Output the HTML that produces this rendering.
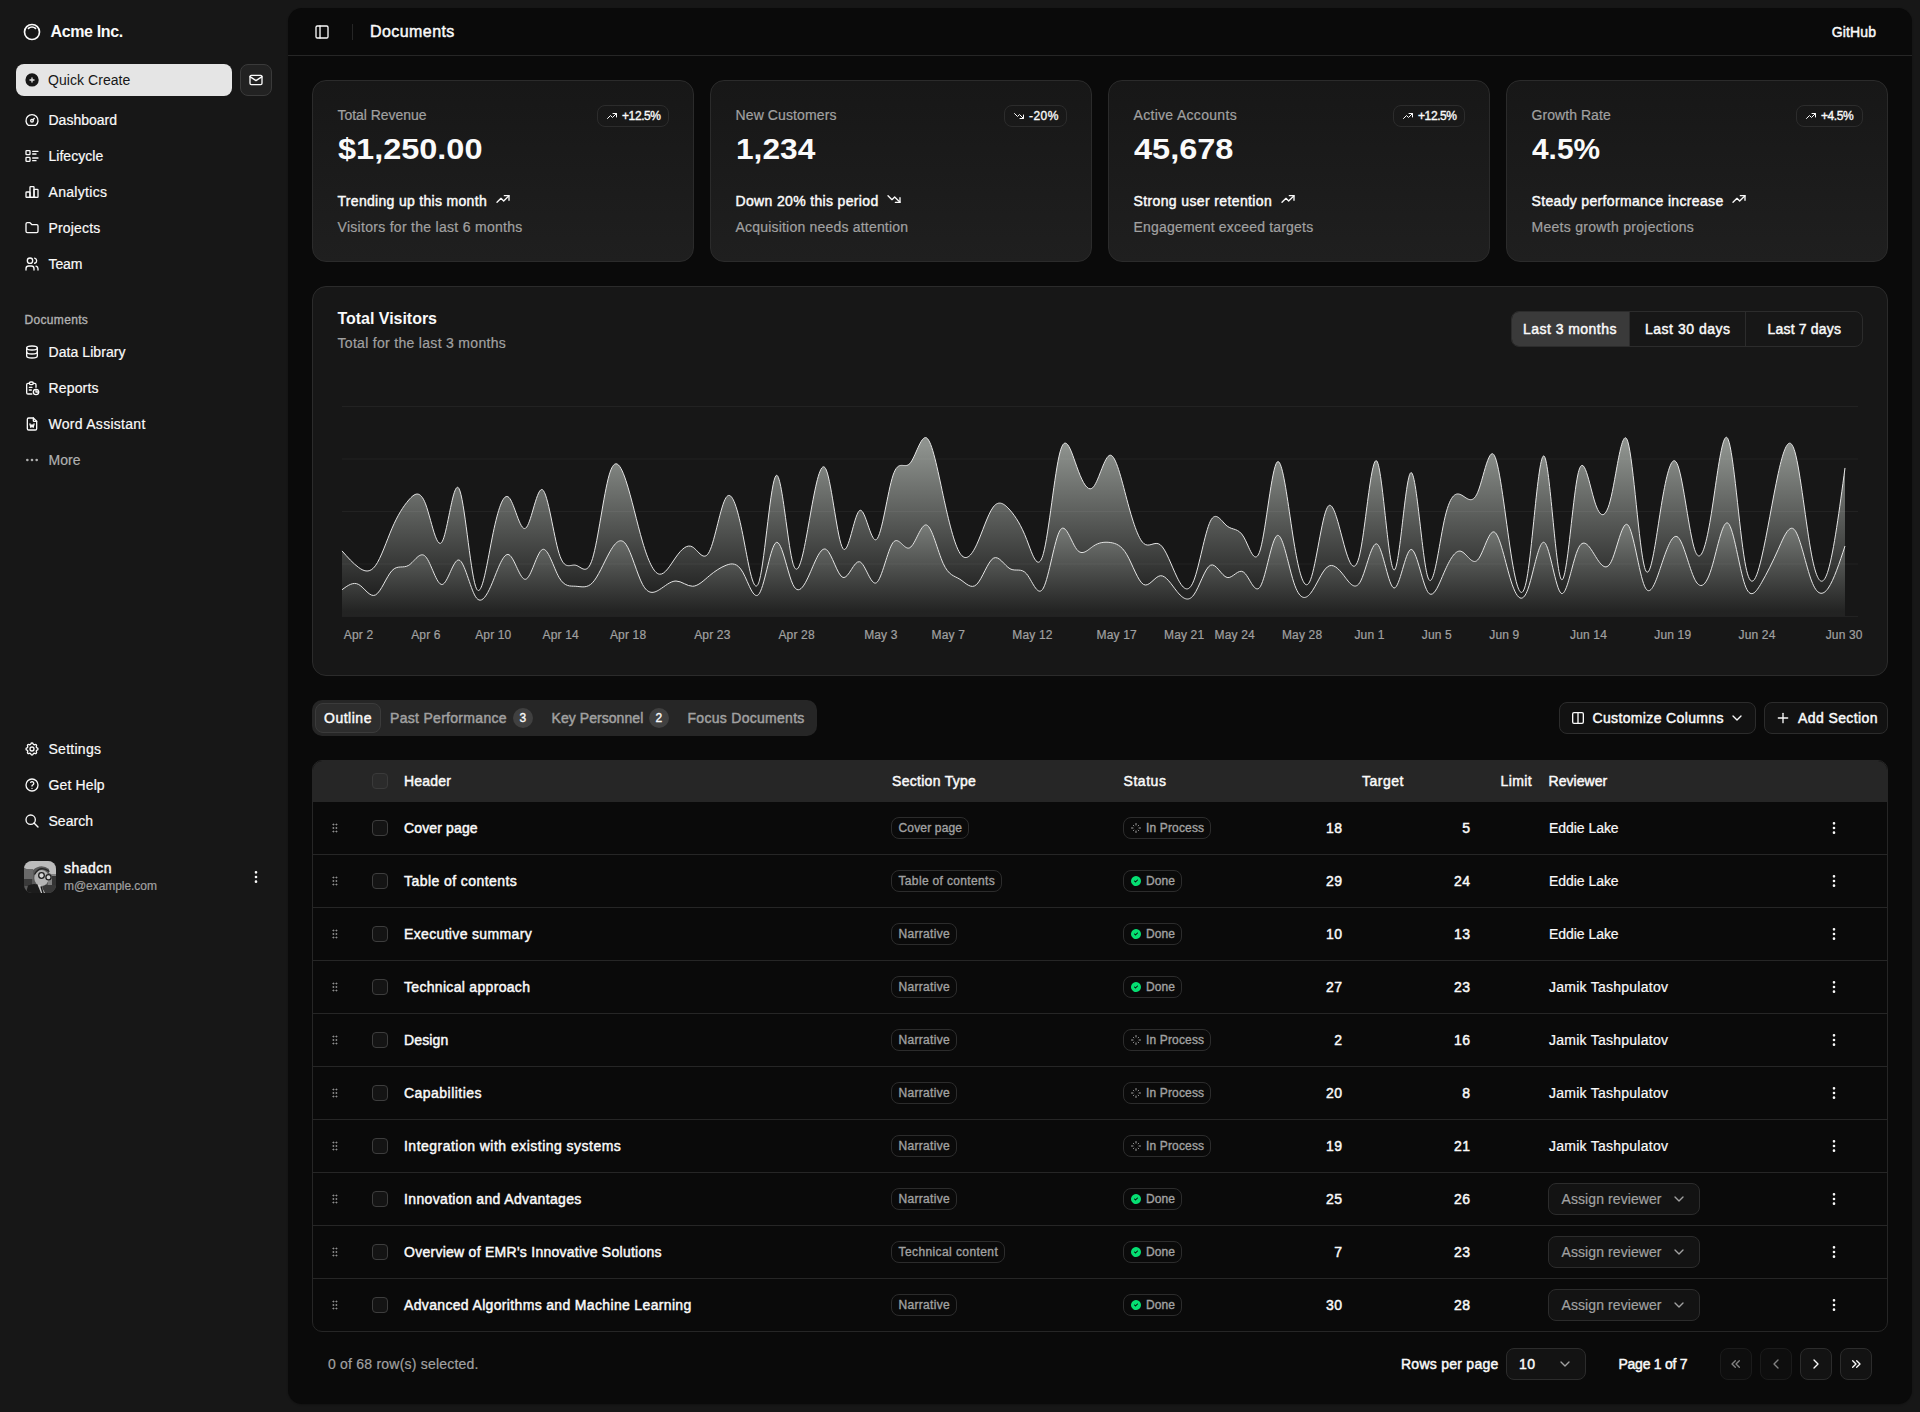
<!DOCTYPE html>
<html><head><meta charset="utf-8"><title>Documents</title>
<style>
html,body{margin:0;padding:0;}
body{width:1920px;height:1412px;background:#171717;position:relative;overflow:hidden;font-family:"Liberation Sans",sans-serif;}
.t{position:absolute;white-space:nowrap;}
.r{position:absolute;}
.ic{position:absolute;overflow:visible;}
</style></head><body>
<svg class="ic" style="left:22px;top:22px;width:20px;height:20px;" viewBox="0 0 24 24" fill="none" stroke="#fafafa" stroke-width="2" stroke-linecap="round" stroke-linejoin="round"><path d="M5.636 5.636a9 9 0 1 0 12.728 12.728a9 9 0 0 0 -12.728 -12.728z"/><path d="M16.243 7.757a6 6 0 0 0 -8.486 0"/></svg>
<div class="t" style="left:50.5px;top:24px;font-size:16px;line-height:16px;color:#fafafa;font-weight:700;letter-spacing:-0.363px;">Acme Inc.</div>
<div class="r" style="left:16px;top:64px;width:216px;height:32px;background:#e5e5e5;border-radius:8px;"></div>
<svg class="ic" style="left:24px;top:72px;width:16px;height:16px;" viewBox="0 0 24 24" fill="#171717" stroke="none"><path d="M4.929 4.929a10 10 0 1 1 14.141 14.141a10 10 0 0 1 -14.14 -14.14zm8.071 4.071a1 1 0 1 0 -2 0v2h-2a1 1 0 1 0 0 2h2v2a1 1 0 1 0 2 0v-2h2a1 1 0 1 0 0 -2h-2v-2z"/></svg>
<div class="t" style="left:48px;top:73px;font-size:14px;line-height:14px;color:#171717;letter-spacing:0.055px;">Quick Create</div>
<div class="r" style="left:240px;top:64px;width:32px;height:32px;background:#222222;border:1px solid #3a3a3a;box-sizing:border-box;border-radius:8px;"></div>
<svg class="ic" style="left:248px;top:72px;width:16px;height:16px;" viewBox="0 0 24 24" fill="none" stroke="#fafafa" stroke-width="2" stroke-linecap="round" stroke-linejoin="round"><path d="M3 7a2 2 0 0 1 2 -2h14a2 2 0 0 1 2 2v10a2 2 0 0 1 -2 2h-14a2 2 0 0 1 -2 -2v-10z"/><path d="M3 7l9 6l9 -6"/></svg>
<svg class="ic" style="left:24px;top:112px;width:16px;height:16px;" viewBox="0 0 24 24" fill="none" stroke="#fafafa" stroke-width="2" stroke-linecap="round" stroke-linejoin="round"><path d="M12 13m-2 0a2 2 0 1 0 4 0a2 2 0 1 0 -4 0"/><path d="M13.45 11.55l2.05 -2.05"/><path d="M6.4 20a9 9 0 1 1 11.2 0z"/></svg>
<div class="t" style="left:48.5px;top:113px;font-size:14px;line-height:14px;color:#fafafa;-webkit-text-stroke:0.2px #fafafa;">Dashboard</div>
<svg class="ic" style="left:24px;top:148px;width:16px;height:16px;" viewBox="0 0 24 24" fill="none" stroke="#fafafa" stroke-width="2" stroke-linecap="round" stroke-linejoin="round"><path d="M13 5h8"/><path d="M13 9h5"/><path d="M13 15h8"/><path d="M13 19h5"/><path d="M3 4m0 1a1 1 0 0 1 1 -1h4a1 1 0 0 1 1 1v4a1 1 0 0 1 -1 1h-4a1 1 0 0 1 -1 -1z"/><path d="M3 14m0 1a1 1 0 0 1 1 -1h4a1 1 0 0 1 1 1v4a1 1 0 0 1 -1 1h-4a1 1 0 0 1 -1 -1z"/></svg>
<div class="t" style="left:48.5px;top:149px;font-size:14px;line-height:14px;color:#fafafa;-webkit-text-stroke:0.2px #fafafa;letter-spacing:0.025px;">Lifecycle</div>
<svg class="ic" style="left:24px;top:184px;width:16px;height:16px;" viewBox="0 0 24 24" fill="none" stroke="#fafafa" stroke-width="2" stroke-linecap="round" stroke-linejoin="round"><path d="M3 13a1 1 0 0 1 1 -1h4a1 1 0 0 1 1 1v6a1 1 0 0 1 -1 1h-4a1 1 0 0 1 -1 -1l0 -6"/><path d="M15 9a1 1 0 0 1 1 -1h4a1 1 0 0 1 1 1v10a1 1 0 0 1 -1 1h-4a1 1 0 0 1 -1 -1l0 -10"/><path d="M9 5a1 1 0 0 1 1 -1h4a1 1 0 0 1 1 1v14a1 1 0 0 1 -1 1h-4a1 1 0 0 1 -1 -1l0 -14"/><path d="M4 20h14"/></svg>
<div class="t" style="left:48.5px;top:185px;font-size:14px;line-height:14px;color:#fafafa;-webkit-text-stroke:0.2px #fafafa;letter-spacing:0.312px;">Analytics</div>
<svg class="ic" style="left:24px;top:220px;width:16px;height:16px;" viewBox="0 0 24 24" fill="none" stroke="#fafafa" stroke-width="2" stroke-linecap="round" stroke-linejoin="round"><path d="M5 4h4l3 3h7a2 2 0 0 1 2 2v8a2 2 0 0 1 -2 2h-14a2 2 0 0 1 -2 -2v-11a2 2 0 0 1 2 -2"/></svg>
<div class="t" style="left:48.5px;top:221px;font-size:14px;line-height:14px;color:#fafafa;-webkit-text-stroke:0.2px #fafafa;letter-spacing:0.179px;">Projects</div>
<svg class="ic" style="left:24px;top:256px;width:16px;height:16px;" viewBox="0 0 24 24" fill="none" stroke="#fafafa" stroke-width="2" stroke-linecap="round" stroke-linejoin="round"><path d="M9 7m-4 0a4 4 0 1 0 8 0a4 4 0 1 0 -8 0"/><path d="M3 21v-2a4 4 0 0 1 4 -4h4a4 4 0 0 1 4 4v2"/><path d="M16 3.13a4 4 0 0 1 0 7.75"/><path d="M21 21v-2a4 4 0 0 0 -3 -3.85"/></svg>
<div class="t" style="left:48.5px;top:257px;font-size:14px;line-height:14px;color:#fafafa;-webkit-text-stroke:0.2px #fafafa;letter-spacing:-0.083px;">Team</div>
<div class="t" style="left:24.5px;top:314px;font-size:12px;line-height:12px;color:#b0b0b0;-webkit-text-stroke:0.35px #b0b0b0;letter-spacing:0.325px;">Documents</div>
<svg class="ic" style="left:24px;top:344px;width:16px;height:16px;" viewBox="0 0 24 24" fill="none" stroke="#fafafa" stroke-width="2" stroke-linecap="round" stroke-linejoin="round"><path d="M12 6m-8 0a8 3 0 1 0 16 0a8 3 0 1 0 -16 0"/><path d="M4 6v6a8 3 0 0 0 16 0v-6"/><path d="M4 12v6a8 3 0 0 0 16 0v-6"/></svg>
<div class="t" style="left:48.5px;top:345px;font-size:14px;line-height:14px;color:#fafafa;-webkit-text-stroke:0.2px #fafafa;letter-spacing:0.064px;">Data Library</div>
<svg class="ic" style="left:24px;top:380px;width:16px;height:16px;" viewBox="0 0 24 24" fill="none" stroke="#fafafa" stroke-width="2" stroke-linecap="round" stroke-linejoin="round"><path d="M8 5h-2a2 2 0 0 0 -2 2v12a2 2 0 0 0 2 2h5.697"/><path d="M18 14v4h4"/><path d="M18 11v-4a2 2 0 0 0 -2 -2h-2"/><path d="M8 3m0 2a2 2 0 0 1 2 -2h2a2 2 0 0 1 2 2v0a2 2 0 0 1 -2 2h-2a2 2 0 0 1 -2 -2z"/><path d="M18 18m-4 0a4 4 0 1 0 8 0a4 4 0 1 0 -8 0"/><path d="M8 11h4"/><path d="M8 15h3"/></svg>
<div class="t" style="left:48.5px;top:381px;font-size:14px;line-height:14px;color:#fafafa;-webkit-text-stroke:0.2px #fafafa;letter-spacing:0.15px;">Reports</div>
<svg class="ic" style="left:24px;top:416px;width:16px;height:16px;" viewBox="0 0 24 24" fill="none" stroke="#fafafa" stroke-width="2" stroke-linecap="round" stroke-linejoin="round"><path d="M14 3v4a1 1 0 0 0 1 1h4"/><path d="M17 21h-10a2 2 0 0 1 -2 -2v-14a2 2 0 0 1 2 -2h7l5 5v11a2 2 0 0 1 -2 2z"/><path d="M9 12l1.333 5l1.667 -4l1.667 4l1.333 -5"/></svg>
<div class="t" style="left:48.5px;top:417px;font-size:14px;line-height:14px;color:#fafafa;-webkit-text-stroke:0.2px #fafafa;letter-spacing:0.285px;">Word Assistant</div>
<svg class="ic" style="left:24px;top:452px;width:16px;height:16px;" viewBox="0 0 24 24" fill="none" stroke="#b0b0b0" stroke-width="2" stroke-linecap="round" stroke-linejoin="round"><path d="M5 12m-1 0a1 1 0 1 0 2 0a1 1 0 1 0 -2 0"/><path d="M12 12m-1 0a1 1 0 1 0 2 0a1 1 0 1 0 -2 0"/><path d="M19 12m-1 0a1 1 0 1 0 2 0a1 1 0 1 0 -2 0"/></svg>
<div class="t" style="left:48.5px;top:453px;font-size:14px;line-height:14px;color:#b0b0b0;-webkit-text-stroke:0.2px #b0b0b0;letter-spacing:0.033px;">More</div>
<svg class="ic" style="left:24px;top:741px;width:16px;height:16px;" viewBox="0 0 24 24" fill="none" stroke="#fafafa" stroke-width="2" stroke-linecap="round" stroke-linejoin="round"><path d="M10.325 4.317c.426 -1.756 2.924 -1.756 3.35 0a1.724 1.724 0 0 0 2.573 1.066c1.543 -.94 3.31 .826 2.37 2.37a1.724 1.724 0 0 0 1.065 2.572c1.756 .426 1.756 2.924 0 3.35a1.724 1.724 0 0 0 -1.066 2.573c.94 1.543 -.826 3.31 -2.37 2.37a1.724 1.724 0 0 0 -2.572 1.065c-.426 1.756 -2.924 1.756 -3.35 0a1.724 1.724 0 0 0 -2.573 -1.066c-1.543 .94 -3.31 -.826 -2.37 -2.37a1.724 1.724 0 0 0 -1.065 -2.572c-1.756 -.426 -1.756 -2.924 0 -3.35a1.724 1.724 0 0 0 1.066 -2.573c-.94 -1.543 .826 -3.31 2.37 -2.37c1 .608 2.296 .07 2.572 -1.065z"/><path d="M9 12a3 3 0 1 0 6 0a3 3 0 0 0 -6 0"/></svg>
<div class="t" style="left:48.5px;top:742px;font-size:14px;line-height:14px;color:#fafafa;-webkit-text-stroke:0.2px #fafafa;letter-spacing:0.271px;">Settings</div>
<svg class="ic" style="left:24px;top:777px;width:16px;height:16px;" viewBox="0 0 24 24" fill="none" stroke="#fafafa" stroke-width="2" stroke-linecap="round" stroke-linejoin="round"><path d="M12 12m-9 0a9 9 0 1 0 18 0a9 9 0 1 0 -18 0"/><path d="M12 17l0 .01"/><path d="M12 13.5a1.5 1.5 0 0 1 1 -1.5a2.6 2.6 0 1 0 -3 -4"/></svg>
<div class="t" style="left:48.5px;top:778px;font-size:14px;line-height:14px;color:#fafafa;-webkit-text-stroke:0.2px #fafafa;letter-spacing:0.129px;">Get Help</div>
<svg class="ic" style="left:24px;top:813px;width:16px;height:16px;" viewBox="0 0 24 24" fill="none" stroke="#fafafa" stroke-width="2" stroke-linecap="round" stroke-linejoin="round"><path d="M10 10m-7 0a7 7 0 1 0 14 0a7 7 0 1 0 -14 0"/><path d="M21 21l-6 -6"/></svg>
<div class="t" style="left:48.5px;top:814px;font-size:14px;line-height:14px;color:#fafafa;-webkit-text-stroke:0.2px #fafafa;letter-spacing:0.02px;">Search</div>
<div class="r" style="left:24px;top:861px;width:32px;height:32px;border-radius:8px;overflow:hidden;"><svg width="32" height="32" viewBox="0 0 32 32" style="position:absolute;left:0;top:0"><rect width="32" height="32" fill="#5a5a5a"/><path d="M0 0 H32 V15 Q28 14 25 12 L25 8 Q17 2 9 9 L9 8 Q4 9 0 7Z" fill="#bcbcbc"/><rect x="0" y="8" width="9" height="10" fill="#6a6a6a"/><rect x="0" y="18" width="8" height="7" fill="#3a3a3a"/><rect x="24" y="13" width="8" height="11" fill="#808080"/><rect x="28" y="15" width="4" height="10" fill="#333"/><rect x="19" y="24" width="13" height="8" fill="#383838"/><ellipse cx="17.5" cy="17" rx="7.2" ry="8" fill="#b4b4b4"/><path d="M10.5 13.5 Q16 3.5 25.5 10.5" fill="none" stroke="#262626" stroke-width="1.3"/><circle cx="17.5" cy="14.5" r="2.8" fill="#d6d6d6" stroke="#1e1e1e" stroke-width="1.3"/><circle cx="24.5" cy="16.2" r="2.6" fill="#d0d0d0" stroke="#1e1e1e" stroke-width="1.3"/><path d="M2 32 L4 24.5 Q9 22 13.5 23.5 L19 32Z" fill="#1c1c1c"/><path d="M13.5 23.5 L16.5 24 L21 32 L17 32Z" fill="#cfcfcf"/><path d="M16.3 25.5 L17.8 25.5 L19.8 32 L18.2 32Z" fill="#1a1a1a"/></svg></div>
<div class="t" style="left:64px;top:861px;font-size:14px;line-height:14px;color:#fafafa;-webkit-text-stroke:0.45px #fafafa;letter-spacing:0.46px;">shadcn</div>
<div class="t" style="left:64px;top:880px;font-size:12px;line-height:12px;color:#a1a1a1;-webkit-text-stroke:0.2px #a1a1a1;letter-spacing:-0.05px;">m@example.com</div>
<svg class="ic" style="left:248px;top:869px;width:16px;height:16px;" viewBox="0 0 24 24" fill="none" stroke="#fafafa" stroke-width="2" stroke-linecap="round" stroke-linejoin="round"><path d="M12 12m-1 0a1 1 0 1 0 2 0a1 1 0 1 0 -2 0"/><path d="M12 19m-1 0a1 1 0 1 0 2 0a1 1 0 1 0 -2 0"/><path d="M12 5m-1 0a1 1 0 1 0 2 0a1 1 0 1 0 -2 0"/></svg>
<div class="r" style="left:288px;top:8px;width:1624px;height:1396px;background:#0a0a0a;border-radius:14px;box-shadow:0 1px 2px rgba(0,0,0,0.25);"></div>
<div class="r" style="left:288px;top:55px;width:1624px;height:1px;background:#262626;"></div>
<svg class="ic" style="left:314px;top:24px;width:16px;height:16px;" viewBox="0 0 24 24" fill="none" stroke="#fafafa" stroke-width="2" stroke-linecap="round" stroke-linejoin="round"><rect width="18" height="18" x="3" y="3" rx="2"/><path d="M9 3v18"/></svg>
<div class="r" style="left:352px;top:24px;width:1px;height:16px;background:#262626;"></div>
<div class="t" style="left:370px;top:24px;font-size:16px;line-height:16px;color:#fafafa;-webkit-text-stroke:0.45px #fafafa;letter-spacing:0.425px;">Documents</div>
<div class="t" style="right:43.86px;top:25px;font-size:14px;line-height:14px;color:#fafafa;-webkit-text-stroke:0.45px #fafafa;letter-spacing:0.14px;">GitHub</div>
<div class="r" style="left:312px;top:80px;width:382px;height:182px;background:linear-gradient(to top,#1f1f1f,#171717);border:1px solid #2b2b2b;box-sizing:border-box;border-radius:14px;"></div>
<div class="t" style="left:337.5px;top:108px;font-size:14px;line-height:14px;color:#a1a1a1;-webkit-text-stroke:0.2px #a1a1a1;letter-spacing:-0.042px;">Total Revenue</div>
<div class="t" style="left:338px;top:134px;font-size:30px;line-height:30px;color:#fafafa;font-weight:700;transform:scaleX(1.0827);transform-origin:0 0;">$1,250.00</div>
<div class="r" style="left:597px;top:105px;width:72px;height:22px;border:1px solid #2c2c2c;box-sizing:border-box;border-radius:8px;"></div>
<svg class="ic" style="left:606px;top:110px;width:12px;height:12px;" viewBox="0 0 24 24" fill="none" stroke="#fafafa" stroke-width="2" stroke-linecap="round" stroke-linejoin="round"><path d="M3 17l6 -6l4 4l8 -8"/><path d="M14 7l7 0l0 7"/></svg>
<div class="t" style="left:622px;top:110px;font-size:12px;line-height:12px;color:#fafafa;-webkit-text-stroke:0.35px #fafafa;letter-spacing:-0.4px;">+12.5%</div>
<div class="t" style="left:337.5px;top:194px;font-size:14px;line-height:14px;color:#fafafa;-webkit-text-stroke:0.45px #fafafa;letter-spacing:0.31px;">Trending up this month</div>
<svg class="ic" style="left:495.0px;top:191px;width:16px;height:16px;" viewBox="0 0 24 24" fill="none" stroke="#fafafa" stroke-width="2" stroke-linecap="round" stroke-linejoin="round"><path d="M3 17l6 -6l4 4l8 -8"/><path d="M14 7l7 0l0 7"/></svg>
<div class="t" style="left:337.5px;top:220px;font-size:14px;line-height:14px;color:#a1a1a1;-webkit-text-stroke:0.2px #a1a1a1;letter-spacing:0.293px;">Visitors for the last 6 months</div>
<div class="r" style="left:710px;top:80px;width:382px;height:182px;background:linear-gradient(to top,#1f1f1f,#171717);border:1px solid #2b2b2b;box-sizing:border-box;border-radius:14px;"></div>
<div class="t" style="left:735.5px;top:108px;font-size:14px;line-height:14px;color:#a1a1a1;-webkit-text-stroke:0.2px #a1a1a1;letter-spacing:0.117px;">New Customers</div>
<div class="t" style="left:736px;top:134px;font-size:30px;line-height:30px;color:#fafafa;font-weight:700;transform:scaleX(1.0560);transform-origin:0 0;">1,234</div>
<div class="r" style="left:1004px;top:105px;width:63px;height:22px;border:1px solid #2c2c2c;box-sizing:border-box;border-radius:8px;"></div>
<svg class="ic" style="left:1013px;top:110px;width:12px;height:12px;" viewBox="0 0 24 24" fill="none" stroke="#fafafa" stroke-width="2" stroke-linecap="round" stroke-linejoin="round"><path d="M3 7l6 6l4 -4l8 8"/><path d="M21 10l0 7l-7 0"/></svg>
<div class="t" style="left:1029px;top:110px;font-size:12px;line-height:12px;color:#fafafa;-webkit-text-stroke:0.35px #fafafa;letter-spacing:0.467px;">-20%</div>
<div class="t" style="left:735.5px;top:194px;font-size:14px;line-height:14px;color:#fafafa;-webkit-text-stroke:0.45px #fafafa;letter-spacing:0.342px;">Down 20% this period</div>
<svg class="ic" style="left:886.0px;top:191px;width:16px;height:16px;" viewBox="0 0 24 24" fill="none" stroke="#fafafa" stroke-width="2" stroke-linecap="round" stroke-linejoin="round"><path d="M3 7l6 6l4 -4l8 8"/><path d="M21 10l0 7l-7 0"/></svg>
<div class="t" style="left:735.5px;top:220px;font-size:14px;line-height:14px;color:#a1a1a1;-webkit-text-stroke:0.2px #a1a1a1;letter-spacing:0.2px;">Acquisition needs attention</div>
<div class="r" style="left:1108px;top:80px;width:382px;height:182px;background:linear-gradient(to top,#1f1f1f,#171717);border:1px solid #2b2b2b;box-sizing:border-box;border-radius:14px;"></div>
<div class="t" style="left:1133.5px;top:108px;font-size:14px;line-height:14px;color:#a1a1a1;-webkit-text-stroke:0.2px #a1a1a1;letter-spacing:0.307px;">Active Accounts</div>
<div class="t" style="left:1134px;top:134px;font-size:30px;line-height:30px;color:#fafafa;font-weight:700;transform:scaleX(1.0837);transform-origin:0 0;">45,678</div>
<div class="r" style="left:1393px;top:105px;width:72px;height:22px;border:1px solid #2c2c2c;box-sizing:border-box;border-radius:8px;"></div>
<svg class="ic" style="left:1402px;top:110px;width:12px;height:12px;" viewBox="0 0 24 24" fill="none" stroke="#fafafa" stroke-width="2" stroke-linecap="round" stroke-linejoin="round"><path d="M3 17l6 -6l4 4l8 -8"/><path d="M14 7l7 0l0 7"/></svg>
<div class="t" style="left:1418px;top:110px;font-size:12px;line-height:12px;color:#fafafa;-webkit-text-stroke:0.35px #fafafa;letter-spacing:-0.4px;">+12.5%</div>
<div class="t" style="left:1133.5px;top:194px;font-size:14px;line-height:14px;color:#fafafa;-webkit-text-stroke:0.45px #fafafa;letter-spacing:0.375px;">Strong user retention</div>
<svg class="ic" style="left:1280.0px;top:191px;width:16px;height:16px;" viewBox="0 0 24 24" fill="none" stroke="#fafafa" stroke-width="2" stroke-linecap="round" stroke-linejoin="round"><path d="M3 17l6 -6l4 4l8 -8"/><path d="M14 7l7 0l0 7"/></svg>
<div class="t" style="left:1133.5px;top:220px;font-size:14px;line-height:14px;color:#a1a1a1;-webkit-text-stroke:0.2px #a1a1a1;letter-spacing:0.188px;">Engagement exceed targets</div>
<div class="r" style="left:1506px;top:80px;width:382px;height:182px;background:linear-gradient(to top,#1f1f1f,#171717);border:1px solid #2b2b2b;box-sizing:border-box;border-radius:14px;"></div>
<div class="t" style="left:1531.5px;top:108px;font-size:14px;line-height:14px;color:#a1a1a1;-webkit-text-stroke:0.2px #a1a1a1;letter-spacing:0.06px;">Growth Rate</div>
<div class="t" style="left:1532px;top:134px;font-size:30px;line-height:30px;color:#fafafa;font-weight:700;transform:scaleX(0.9956);transform-origin:0 0;">4.5%</div>
<div class="r" style="left:1796px;top:105px;width:67px;height:22px;border:1px solid #2c2c2c;box-sizing:border-box;border-radius:8px;"></div>
<svg class="ic" style="left:1805px;top:110px;width:12px;height:12px;" viewBox="0 0 24 24" fill="none" stroke="#fafafa" stroke-width="2" stroke-linecap="round" stroke-linejoin="round"><path d="M3 17l6 -6l4 4l8 -8"/><path d="M14 7l7 0l0 7"/></svg>
<div class="t" style="left:1821px;top:110px;font-size:12px;line-height:12px;color:#fafafa;-webkit-text-stroke:0.35px #fafafa;letter-spacing:-0.45px;">+4.5%</div>
<div class="t" style="left:1531.5px;top:194px;font-size:14px;line-height:14px;color:#fafafa;-webkit-text-stroke:0.45px #fafafa;letter-spacing:0.338px;">Steady performance increase</div>
<svg class="ic" style="left:1731.3px;top:191px;width:16px;height:16px;" viewBox="0 0 24 24" fill="none" stroke="#fafafa" stroke-width="2" stroke-linecap="round" stroke-linejoin="round"><path d="M3 17l6 -6l4 4l8 -8"/><path d="M14 7l7 0l0 7"/></svg>
<div class="t" style="left:1531.5px;top:220px;font-size:14px;line-height:14px;color:#a1a1a1;-webkit-text-stroke:0.2px #a1a1a1;letter-spacing:0.291px;">Meets growth projections</div>
<div class="r" style="left:312px;top:286px;width:1576px;height:390px;background:#171717;border:1px solid #2b2b2b;box-sizing:border-box;border-radius:14px;"></div>
<div class="t" style="left:337.5px;top:311px;font-size:16px;line-height:16px;color:#fafafa;font-weight:700;letter-spacing:-0.031px;">Total Visitors</div>
<div class="t" style="left:337.5px;top:336px;font-size:14px;line-height:14px;color:#a1a1a1;-webkit-text-stroke:0.2px #a1a1a1;letter-spacing:0.308px;">Total for the last 3 months</div>
<div class="r" style="left:1511px;top:311px;width:352px;height:36px;border:1px solid #2c2c2c;box-sizing:border-box;border-radius:8px;"></div>
<div class="r" style="left:1512px;top:312px;width:117px;height:34px;background:#3a3a3a;border-radius:7px 0 0 7px;"></div>
<div class="r" style="left:1629px;top:312px;width:1px;height:34px;background:#2c2c2c;"></div>
<div class="r" style="left:1745px;top:312px;width:1px;height:34px;background:#2c2c2c;"></div>
<div class="t" style="left:1523px;top:322px;font-size:14px;line-height:14px;color:#fafafa;-webkit-text-stroke:0.45px #fafafa;letter-spacing:0.458px;">Last 3 months</div>
<div class="t" style="left:1645px;top:322px;font-size:14px;line-height:14px;color:#fafafa;-webkit-text-stroke:0.45px #fafafa;letter-spacing:0.509px;">Last 30 days</div>
<div class="t" style="left:1767.5px;top:322px;font-size:14px;line-height:14px;color:#fafafa;-webkit-text-stroke:0.45px #fafafa;letter-spacing:0.19px;">Last 7 days</div>
<svg class="ic" style="left:0;top:0;width:1920px;height:700px" viewBox="0 0 1920 700"><defs><linearGradient id="fd" x1="0" y1="0" x2="0" y2="1"><stop offset="5%" stop-color="#dde4dd" stop-opacity="1"/><stop offset="95%" stop-color="#dde4dd" stop-opacity="0.1"/></linearGradient><linearGradient id="fm" x1="0" y1="0" x2="0" y2="1"><stop offset="5%" stop-color="#dde4dd" stop-opacity="0.8"/><stop offset="95%" stop-color="#dde4dd" stop-opacity="0.1"/></linearGradient></defs><line x1="342" x2="1858" y1="406.5" y2="406.5" stroke="#222222" stroke-width="1"/><line x1="342" x2="1858" y1="459" y2="459" stroke="#222222" stroke-width="1"/><line x1="342" x2="1858" y1="511.5" y2="511.5" stroke="#222222" stroke-width="1"/><line x1="342" x2="1858" y1="564" y2="564" stroke="#222222" stroke-width="1"/><line x1="342" x2="1858" y1="616.5" y2="616.5" stroke="#222222" stroke-width="1"/><path d="M342.00,589.75C347.57,585.60,353.13,581.45,358.70,584.50C364.27,587.55,369.83,597.80,375.40,595.00C380.97,592.20,386.53,576.36,392.10,570.50C397.67,564.64,403.23,568.76,408.80,565.25C414.37,561.74,419.93,550.59,425.50,556.50C431.07,562.41,436.63,585.37,442.20,584.50C447.77,583.63,453.33,558.91,458.90,560.00C464.47,561.09,470.03,587.99,475.60,596.75C481.17,605.51,486.73,596.15,492.30,582.75C497.87,569.35,503.43,551.93,509.00,554.75C514.57,557.57,520.13,580.64,525.70,579.25C531.27,577.86,536.83,552.02,542.40,549.50C547.97,546.98,553.53,567.77,559.10,577.50C564.67,587.23,570.23,585.90,575.80,586.25C581.37,586.60,586.93,588.62,592.50,582.75C598.07,576.88,603.63,563.12,609.20,553.00C614.77,542.88,620.33,536.42,625.90,544.25C631.47,552.08,637.03,574.22,642.60,584.50C648.17,594.78,653.73,593.20,659.30,589.75C664.87,586.30,670.43,580.97,676.00,581.00C681.57,581.03,687.13,586.40,692.70,586.25C698.27,586.10,703.83,580.42,709.40,575.75C714.97,571.08,720.53,567.42,726.10,565.25C731.67,563.08,737.23,562.41,742.80,572.25C748.37,582.09,753.93,602.44,759.50,593.25C765.07,584.06,770.63,545.32,776.20,542.50C781.77,539.68,787.33,572.78,792.90,584.50C798.47,596.22,804.03,586.58,809.60,574.00C815.17,561.42,820.73,545.91,826.30,549.50C831.87,553.09,837.43,575.77,843.00,577.50C848.57,579.23,854.13,560.00,859.70,561.75C865.27,563.50,870.83,586.22,876.40,582.75C881.97,579.28,887.53,549.63,893.10,542.50C898.67,535.37,904.23,550.75,909.80,547.75C915.37,544.75,920.93,523.38,926.50,525.00C932.07,526.62,937.63,551.22,943.20,563.50C948.77,575.78,954.33,575.75,959.90,579.25C965.47,582.75,971.03,589.77,976.60,584.50C982.17,579.23,987.73,561.65,993.30,558.25C998.87,554.85,1004.43,565.62,1010.00,568.75C1015.57,571.88,1021.13,567.37,1026.70,574.00C1032.27,580.63,1037.83,598.40,1043.40,588.00C1048.97,577.60,1054.53,539.04,1060.10,530.25C1065.67,521.46,1071.23,542.44,1076.80,549.50C1082.37,556.56,1087.93,549.70,1093.50,546.00C1099.07,542.30,1104.63,541.78,1110.20,542.50C1115.77,543.22,1121.33,545.19,1126.90,554.75C1132.47,564.31,1138.03,581.46,1143.60,584.50C1149.17,587.54,1154.73,576.48,1160.30,575.75C1165.87,575.02,1171.43,584.61,1177.00,591.50C1182.57,598.39,1188.13,602.58,1193.70,595.00C1199.27,587.42,1204.83,568.08,1210.40,565.25C1215.97,562.42,1221.53,576.10,1227.10,577.50C1232.67,578.90,1238.23,568.02,1243.80,572.25C1249.37,576.48,1254.93,595.82,1260.50,586.25C1266.07,576.68,1271.63,538.20,1277.20,535.50C1282.77,532.80,1288.33,565.88,1293.90,582.75C1299.47,599.62,1305.03,600.30,1310.60,593.25C1316.17,586.20,1321.73,571.44,1327.30,567.00C1332.87,562.56,1338.43,568.45,1344.00,575.75C1349.57,583.05,1355.13,591.77,1360.70,581.00C1366.27,570.23,1371.83,539.97,1377.40,544.25C1382.97,548.53,1388.53,587.36,1394.10,588.00C1399.67,588.64,1405.23,551.11,1410.80,549.50C1416.37,547.89,1421.93,582.22,1427.50,591.50C1433.07,600.78,1438.63,585.03,1444.20,572.25C1449.77,559.47,1455.33,549.67,1460.90,551.25C1466.47,552.83,1472.03,565.78,1477.60,560.00C1483.17,554.22,1488.73,529.70,1494.30,532.00C1499.87,534.30,1505.43,563.41,1511.00,581.00C1516.57,598.59,1522.13,604.67,1527.70,589.75C1533.27,574.83,1538.83,538.92,1544.40,542.50C1549.97,546.08,1555.53,589.17,1561.10,593.25C1566.67,597.33,1572.23,562.41,1577.80,549.50C1583.37,536.59,1588.93,545.68,1594.50,554.75C1600.07,563.82,1605.63,572.88,1611.20,561.75C1616.77,550.62,1622.33,519.29,1627.90,525.00C1633.47,530.71,1639.03,573.45,1644.60,586.25C1650.17,599.05,1655.73,581.92,1661.30,565.25C1666.87,548.58,1672.43,532.36,1678.00,537.25C1683.57,542.14,1689.13,568.13,1694.70,579.25C1700.27,590.37,1705.83,586.62,1711.40,568.75C1716.97,550.88,1722.53,518.90,1728.10,523.25C1733.67,527.60,1739.23,568.30,1744.80,584.50C1750.37,600.70,1755.93,592.41,1761.50,582.75C1767.07,573.09,1772.63,562.05,1778.20,549.50C1783.77,536.95,1789.33,522.90,1794.90,530.25C1800.47,537.60,1806.03,566.35,1811.60,581.00C1817.17,595.65,1822.73,596.18,1828.30,588.00C1833.87,579.82,1839.43,562.91,1845.00,546.00L1845.00,616.00L342.00,616.00Z" fill="url(#fm)" fill-opacity="0.6" stroke="none"/><path d="M342.00,589.75C347.57,585.60,353.13,581.45,358.70,584.50C364.27,587.55,369.83,597.80,375.40,595.00C380.97,592.20,386.53,576.36,392.10,570.50C397.67,564.64,403.23,568.76,408.80,565.25C414.37,561.74,419.93,550.59,425.50,556.50C431.07,562.41,436.63,585.37,442.20,584.50C447.77,583.63,453.33,558.91,458.90,560.00C464.47,561.09,470.03,587.99,475.60,596.75C481.17,605.51,486.73,596.15,492.30,582.75C497.87,569.35,503.43,551.93,509.00,554.75C514.57,557.57,520.13,580.64,525.70,579.25C531.27,577.86,536.83,552.02,542.40,549.50C547.97,546.98,553.53,567.77,559.10,577.50C564.67,587.23,570.23,585.90,575.80,586.25C581.37,586.60,586.93,588.62,592.50,582.75C598.07,576.88,603.63,563.12,609.20,553.00C614.77,542.88,620.33,536.42,625.90,544.25C631.47,552.08,637.03,574.22,642.60,584.50C648.17,594.78,653.73,593.20,659.30,589.75C664.87,586.30,670.43,580.97,676.00,581.00C681.57,581.03,687.13,586.40,692.70,586.25C698.27,586.10,703.83,580.42,709.40,575.75C714.97,571.08,720.53,567.42,726.10,565.25C731.67,563.08,737.23,562.41,742.80,572.25C748.37,582.09,753.93,602.44,759.50,593.25C765.07,584.06,770.63,545.32,776.20,542.50C781.77,539.68,787.33,572.78,792.90,584.50C798.47,596.22,804.03,586.58,809.60,574.00C815.17,561.42,820.73,545.91,826.30,549.50C831.87,553.09,837.43,575.77,843.00,577.50C848.57,579.23,854.13,560.00,859.70,561.75C865.27,563.50,870.83,586.22,876.40,582.75C881.97,579.28,887.53,549.63,893.10,542.50C898.67,535.37,904.23,550.75,909.80,547.75C915.37,544.75,920.93,523.38,926.50,525.00C932.07,526.62,937.63,551.22,943.20,563.50C948.77,575.78,954.33,575.75,959.90,579.25C965.47,582.75,971.03,589.77,976.60,584.50C982.17,579.23,987.73,561.65,993.30,558.25C998.87,554.85,1004.43,565.62,1010.00,568.75C1015.57,571.88,1021.13,567.37,1026.70,574.00C1032.27,580.63,1037.83,598.40,1043.40,588.00C1048.97,577.60,1054.53,539.04,1060.10,530.25C1065.67,521.46,1071.23,542.44,1076.80,549.50C1082.37,556.56,1087.93,549.70,1093.50,546.00C1099.07,542.30,1104.63,541.78,1110.20,542.50C1115.77,543.22,1121.33,545.19,1126.90,554.75C1132.47,564.31,1138.03,581.46,1143.60,584.50C1149.17,587.54,1154.73,576.48,1160.30,575.75C1165.87,575.02,1171.43,584.61,1177.00,591.50C1182.57,598.39,1188.13,602.58,1193.70,595.00C1199.27,587.42,1204.83,568.08,1210.40,565.25C1215.97,562.42,1221.53,576.10,1227.10,577.50C1232.67,578.90,1238.23,568.02,1243.80,572.25C1249.37,576.48,1254.93,595.82,1260.50,586.25C1266.07,576.68,1271.63,538.20,1277.20,535.50C1282.77,532.80,1288.33,565.88,1293.90,582.75C1299.47,599.62,1305.03,600.30,1310.60,593.25C1316.17,586.20,1321.73,571.44,1327.30,567.00C1332.87,562.56,1338.43,568.45,1344.00,575.75C1349.57,583.05,1355.13,591.77,1360.70,581.00C1366.27,570.23,1371.83,539.97,1377.40,544.25C1382.97,548.53,1388.53,587.36,1394.10,588.00C1399.67,588.64,1405.23,551.11,1410.80,549.50C1416.37,547.89,1421.93,582.22,1427.50,591.50C1433.07,600.78,1438.63,585.03,1444.20,572.25C1449.77,559.47,1455.33,549.67,1460.90,551.25C1466.47,552.83,1472.03,565.78,1477.60,560.00C1483.17,554.22,1488.73,529.70,1494.30,532.00C1499.87,534.30,1505.43,563.41,1511.00,581.00C1516.57,598.59,1522.13,604.67,1527.70,589.75C1533.27,574.83,1538.83,538.92,1544.40,542.50C1549.97,546.08,1555.53,589.17,1561.10,593.25C1566.67,597.33,1572.23,562.41,1577.80,549.50C1583.37,536.59,1588.93,545.68,1594.50,554.75C1600.07,563.82,1605.63,572.88,1611.20,561.75C1616.77,550.62,1622.33,519.29,1627.90,525.00C1633.47,530.71,1639.03,573.45,1644.60,586.25C1650.17,599.05,1655.73,581.92,1661.30,565.25C1666.87,548.58,1672.43,532.36,1678.00,537.25C1683.57,542.14,1689.13,568.13,1694.70,579.25C1700.27,590.37,1705.83,586.62,1711.40,568.75C1716.97,550.88,1722.53,518.90,1728.10,523.25C1733.67,527.60,1739.23,568.30,1744.80,584.50C1750.37,600.70,1755.93,592.41,1761.50,582.75C1767.07,573.09,1772.63,562.05,1778.20,549.50C1783.77,536.95,1789.33,522.90,1794.90,530.25C1800.47,537.60,1806.03,566.35,1811.60,581.00C1817.17,595.65,1822.73,596.18,1828.30,588.00C1833.87,579.82,1839.43,562.91,1845.00,546.00" fill="none" stroke="#e5e5e5" stroke-width="1"/><path d="M342.00,550.90C347.57,557.19,353.13,563.47,358.70,567.52C364.27,571.58,369.83,573.40,375.40,565.77C380.97,558.15,386.53,541.08,392.10,528.15C397.67,515.22,403.23,506.45,408.80,499.98C414.37,493.50,419.93,489.33,425.50,503.82C431.07,518.32,436.63,551.47,442.20,541.62C447.77,531.78,453.33,478.95,458.90,488.43C464.47,497.90,470.03,569.67,475.60,586.42C481.17,603.18,486.73,564.93,492.30,537.08C497.87,509.22,503.43,491.76,509.00,497.52C514.57,503.29,520.13,532.29,525.70,528.15C531.27,524.01,536.83,486.73,542.40,489.65C547.97,492.57,553.53,535.69,559.10,553.52C564.67,571.36,570.23,563.91,575.80,565.25C581.37,566.59,586.93,576.71,592.50,558.60C598.07,540.49,603.63,494.14,609.20,474.95C614.77,455.76,620.33,463.74,625.90,480.55C631.47,497.36,637.03,523.02,642.60,541.98C648.17,560.93,653.73,573.18,659.30,574.17C664.87,575.17,670.43,564.90,676.00,557.02C681.57,549.15,687.13,543.66,692.70,547.05C698.27,550.44,703.83,562.72,709.40,551.60C714.97,540.48,720.53,505.98,726.10,497.52C731.67,489.07,737.23,506.67,742.80,534.62C748.37,562.58,753.93,600.91,759.50,580.12C765.07,559.34,770.63,479.46,776.20,475.48C781.77,471.49,787.33,543.41,792.90,563.15C798.47,582.89,804.03,550.45,809.60,518.88C815.17,487.30,820.73,456.60,826.30,470.05C831.87,483.50,837.43,541.08,843.00,548.62C848.57,556.17,854.13,513.66,859.70,510.48C865.27,507.29,870.83,543.44,876.40,539.52C881.97,535.61,887.53,491.65,893.10,475.12C898.67,458.60,904.23,469.52,909.80,463.58C915.37,457.63,920.93,434.83,926.50,437.85C932.07,440.87,937.63,469.73,943.20,495.60C948.77,521.47,954.33,544.37,959.90,553.17C965.47,561.98,971.03,556.71,976.60,544.77C982.17,532.84,987.73,514.25,993.30,506.98C998.87,499.70,1004.43,503.76,1010.00,510.12C1015.57,516.49,1021.13,525.17,1026.70,539.52C1032.27,553.88,1037.83,573.91,1043.40,553.52C1048.97,533.14,1054.53,472.34,1060.10,451.85C1065.67,431.36,1071.23,451.18,1076.80,466.73C1082.37,482.27,1087.93,493.53,1093.50,486.85C1099.07,480.17,1104.63,455.53,1110.20,455.18C1115.77,454.82,1121.33,478.73,1126.90,499.62C1132.47,520.52,1138.03,538.40,1143.60,543.38C1149.17,548.35,1154.73,540.44,1160.30,544.77C1165.87,549.11,1171.43,565.71,1177.00,577.15C1182.57,588.59,1188.13,594.86,1193.70,580.83C1199.27,566.79,1204.83,532.44,1210.40,521.15C1215.97,509.86,1221.53,521.64,1227.10,526.05C1232.67,530.46,1238.23,527.49,1243.80,537.08C1249.37,546.66,1254.93,568.79,1260.50,548.98C1266.07,529.16,1271.63,467.40,1277.20,462.00C1282.77,456.60,1288.33,507.55,1293.90,541.98C1299.47,576.40,1305.03,594.28,1310.60,579.60C1316.17,564.92,1321.73,517.66,1327.30,507.50C1332.87,497.34,1338.43,524.29,1344.00,544.60C1349.57,564.91,1355.13,578.60,1360.70,549.85C1366.27,521.10,1371.83,449.91,1377.40,462.00C1382.97,474.09,1388.53,569.47,1394.10,569.98C1399.67,570.48,1405.23,476.11,1410.80,472.68C1416.37,469.24,1421.93,556.75,1427.50,576.10C1433.07,595.45,1438.63,546.64,1444.20,520.80C1449.77,494.96,1455.33,492.09,1460.90,494.73C1466.47,497.36,1472.03,505.51,1477.60,492.62C1483.17,479.74,1488.73,445.82,1494.30,455.35C1499.87,464.88,1505.43,517.84,1511.00,553.88C1516.57,589.91,1522.13,609.00,1527.70,573.65C1533.27,538.30,1538.83,448.52,1544.40,456.40C1549.97,464.28,1555.53,569.82,1561.10,579.08C1566.67,588.33,1572.23,501.29,1577.80,474.95C1583.37,448.61,1588.93,482.98,1594.50,501.02C1600.07,519.07,1605.63,520.80,1611.20,496.82C1616.77,472.85,1622.33,423.15,1627.90,441.88C1633.47,460.60,1639.03,547.73,1644.60,567.52C1650.17,587.32,1655.73,539.79,1661.30,505.57C1666.87,471.36,1672.43,450.46,1678.00,465.85C1683.57,481.24,1689.13,532.93,1694.70,549.67C1700.27,566.42,1705.83,548.23,1711.40,513.27C1716.97,478.32,1722.53,426.60,1728.10,439.25C1733.67,451.90,1739.23,528.93,1744.80,561.40C1750.37,593.87,1755.93,581.79,1761.50,558.08C1767.07,534.36,1772.63,499.02,1778.20,473.55C1783.77,448.08,1789.33,432.48,1794.90,451.85C1800.47,471.22,1806.03,525.57,1811.60,554.92C1817.17,584.28,1822.73,588.64,1828.30,569.98C1833.87,551.31,1839.43,509.63,1845.00,467.95L1845.00,546.00C1839.43,562.91,1833.87,579.82,1828.30,588.00C1822.73,596.18,1817.17,595.65,1811.60,581.00C1806.03,566.35,1800.47,537.60,1794.90,530.25C1789.33,522.90,1783.77,536.95,1778.20,549.50C1772.63,562.05,1767.07,573.09,1761.50,582.75C1755.93,592.41,1750.37,600.70,1744.80,584.50C1739.23,568.30,1733.67,527.60,1728.10,523.25C1722.53,518.90,1716.97,550.88,1711.40,568.75C1705.83,586.62,1700.27,590.37,1694.70,579.25C1689.13,568.13,1683.57,542.14,1678.00,537.25C1672.43,532.36,1666.87,548.58,1661.30,565.25C1655.73,581.92,1650.17,599.05,1644.60,586.25C1639.03,573.45,1633.47,530.71,1627.90,525.00C1622.33,519.29,1616.77,550.62,1611.20,561.75C1605.63,572.88,1600.07,563.82,1594.50,554.75C1588.93,545.68,1583.37,536.59,1577.80,549.50C1572.23,562.41,1566.67,597.33,1561.10,593.25C1555.53,589.17,1549.97,546.08,1544.40,542.50C1538.83,538.92,1533.27,574.83,1527.70,589.75C1522.13,604.67,1516.57,598.59,1511.00,581.00C1505.43,563.41,1499.87,534.30,1494.30,532.00C1488.73,529.70,1483.17,554.22,1477.60,560.00C1472.03,565.78,1466.47,552.83,1460.90,551.25C1455.33,549.67,1449.77,559.47,1444.20,572.25C1438.63,585.03,1433.07,600.78,1427.50,591.50C1421.93,582.22,1416.37,547.89,1410.80,549.50C1405.23,551.11,1399.67,588.64,1394.10,588.00C1388.53,587.36,1382.97,548.53,1377.40,544.25C1371.83,539.97,1366.27,570.23,1360.70,581.00C1355.13,591.77,1349.57,583.05,1344.00,575.75C1338.43,568.45,1332.87,562.56,1327.30,567.00C1321.73,571.44,1316.17,586.20,1310.60,593.25C1305.03,600.30,1299.47,599.62,1293.90,582.75C1288.33,565.88,1282.77,532.80,1277.20,535.50C1271.63,538.20,1266.07,576.68,1260.50,586.25C1254.93,595.82,1249.37,576.48,1243.80,572.25C1238.23,568.02,1232.67,578.90,1227.10,577.50C1221.53,576.10,1215.97,562.42,1210.40,565.25C1204.83,568.08,1199.27,587.42,1193.70,595.00C1188.13,602.58,1182.57,598.39,1177.00,591.50C1171.43,584.61,1165.87,575.02,1160.30,575.75C1154.73,576.48,1149.17,587.54,1143.60,584.50C1138.03,581.46,1132.47,564.31,1126.90,554.75C1121.33,545.19,1115.77,543.22,1110.20,542.50C1104.63,541.78,1099.07,542.30,1093.50,546.00C1087.93,549.70,1082.37,556.56,1076.80,549.50C1071.23,542.44,1065.67,521.46,1060.10,530.25C1054.53,539.04,1048.97,577.60,1043.40,588.00C1037.83,598.40,1032.27,580.63,1026.70,574.00C1021.13,567.37,1015.57,571.88,1010.00,568.75C1004.43,565.62,998.87,554.85,993.30,558.25C987.73,561.65,982.17,579.23,976.60,584.50C971.03,589.77,965.47,582.75,959.90,579.25C954.33,575.75,948.77,575.78,943.20,563.50C937.63,551.22,932.07,526.62,926.50,525.00C920.93,523.38,915.37,544.75,909.80,547.75C904.23,550.75,898.67,535.37,893.10,542.50C887.53,549.63,881.97,579.28,876.40,582.75C870.83,586.22,865.27,563.50,859.70,561.75C854.13,560.00,848.57,579.23,843.00,577.50C837.43,575.77,831.87,553.09,826.30,549.50C820.73,545.91,815.17,561.42,809.60,574.00C804.03,586.58,798.47,596.22,792.90,584.50C787.33,572.78,781.77,539.68,776.20,542.50C770.63,545.32,765.07,584.06,759.50,593.25C753.93,602.44,748.37,582.09,742.80,572.25C737.23,562.41,731.67,563.08,726.10,565.25C720.53,567.42,714.97,571.08,709.40,575.75C703.83,580.42,698.27,586.10,692.70,586.25C687.13,586.40,681.57,581.03,676.00,581.00C670.43,580.97,664.87,586.30,659.30,589.75C653.73,593.20,648.17,594.78,642.60,584.50C637.03,574.22,631.47,552.08,625.90,544.25C620.33,536.42,614.77,542.88,609.20,553.00C603.63,563.12,598.07,576.88,592.50,582.75C586.93,588.62,581.37,586.60,575.80,586.25C570.23,585.90,564.67,587.23,559.10,577.50C553.53,567.77,547.97,546.98,542.40,549.50C536.83,552.02,531.27,577.86,525.70,579.25C520.13,580.64,514.57,557.57,509.00,554.75C503.43,551.93,497.87,569.35,492.30,582.75C486.73,596.15,481.17,605.51,475.60,596.75C470.03,587.99,464.47,561.09,458.90,560.00C453.33,558.91,447.77,583.63,442.20,584.50C436.63,585.37,431.07,562.41,425.50,556.50C419.93,550.59,414.37,561.74,408.80,565.25C403.23,568.76,397.67,564.64,392.10,570.50C386.53,576.36,380.97,592.20,375.40,595.00C369.83,597.80,364.27,587.55,358.70,584.50C353.13,581.45,347.57,585.60,342.00,589.75Z" fill="url(#fd)" fill-opacity="0.6" stroke="none"/><path d="M342.00,550.90C347.57,557.19,353.13,563.47,358.70,567.52C364.27,571.58,369.83,573.40,375.40,565.77C380.97,558.15,386.53,541.08,392.10,528.15C397.67,515.22,403.23,506.45,408.80,499.98C414.37,493.50,419.93,489.33,425.50,503.82C431.07,518.32,436.63,551.47,442.20,541.62C447.77,531.78,453.33,478.95,458.90,488.43C464.47,497.90,470.03,569.67,475.60,586.42C481.17,603.18,486.73,564.93,492.30,537.08C497.87,509.22,503.43,491.76,509.00,497.52C514.57,503.29,520.13,532.29,525.70,528.15C531.27,524.01,536.83,486.73,542.40,489.65C547.97,492.57,553.53,535.69,559.10,553.52C564.67,571.36,570.23,563.91,575.80,565.25C581.37,566.59,586.93,576.71,592.50,558.60C598.07,540.49,603.63,494.14,609.20,474.95C614.77,455.76,620.33,463.74,625.90,480.55C631.47,497.36,637.03,523.02,642.60,541.98C648.17,560.93,653.73,573.18,659.30,574.17C664.87,575.17,670.43,564.90,676.00,557.02C681.57,549.15,687.13,543.66,692.70,547.05C698.27,550.44,703.83,562.72,709.40,551.60C714.97,540.48,720.53,505.98,726.10,497.52C731.67,489.07,737.23,506.67,742.80,534.62C748.37,562.58,753.93,600.91,759.50,580.12C765.07,559.34,770.63,479.46,776.20,475.48C781.77,471.49,787.33,543.41,792.90,563.15C798.47,582.89,804.03,550.45,809.60,518.88C815.17,487.30,820.73,456.60,826.30,470.05C831.87,483.50,837.43,541.08,843.00,548.62C848.57,556.17,854.13,513.66,859.70,510.48C865.27,507.29,870.83,543.44,876.40,539.52C881.97,535.61,887.53,491.65,893.10,475.12C898.67,458.60,904.23,469.52,909.80,463.58C915.37,457.63,920.93,434.83,926.50,437.85C932.07,440.87,937.63,469.73,943.20,495.60C948.77,521.47,954.33,544.37,959.90,553.17C965.47,561.98,971.03,556.71,976.60,544.77C982.17,532.84,987.73,514.25,993.30,506.98C998.87,499.70,1004.43,503.76,1010.00,510.12C1015.57,516.49,1021.13,525.17,1026.70,539.52C1032.27,553.88,1037.83,573.91,1043.40,553.52C1048.97,533.14,1054.53,472.34,1060.10,451.85C1065.67,431.36,1071.23,451.18,1076.80,466.73C1082.37,482.27,1087.93,493.53,1093.50,486.85C1099.07,480.17,1104.63,455.53,1110.20,455.18C1115.77,454.82,1121.33,478.73,1126.90,499.62C1132.47,520.52,1138.03,538.40,1143.60,543.38C1149.17,548.35,1154.73,540.44,1160.30,544.77C1165.87,549.11,1171.43,565.71,1177.00,577.15C1182.57,588.59,1188.13,594.86,1193.70,580.83C1199.27,566.79,1204.83,532.44,1210.40,521.15C1215.97,509.86,1221.53,521.64,1227.10,526.05C1232.67,530.46,1238.23,527.49,1243.80,537.08C1249.37,546.66,1254.93,568.79,1260.50,548.98C1266.07,529.16,1271.63,467.40,1277.20,462.00C1282.77,456.60,1288.33,507.55,1293.90,541.98C1299.47,576.40,1305.03,594.28,1310.60,579.60C1316.17,564.92,1321.73,517.66,1327.30,507.50C1332.87,497.34,1338.43,524.29,1344.00,544.60C1349.57,564.91,1355.13,578.60,1360.70,549.85C1366.27,521.10,1371.83,449.91,1377.40,462.00C1382.97,474.09,1388.53,569.47,1394.10,569.98C1399.67,570.48,1405.23,476.11,1410.80,472.68C1416.37,469.24,1421.93,556.75,1427.50,576.10C1433.07,595.45,1438.63,546.64,1444.20,520.80C1449.77,494.96,1455.33,492.09,1460.90,494.73C1466.47,497.36,1472.03,505.51,1477.60,492.62C1483.17,479.74,1488.73,445.82,1494.30,455.35C1499.87,464.88,1505.43,517.84,1511.00,553.88C1516.57,589.91,1522.13,609.00,1527.70,573.65C1533.27,538.30,1538.83,448.52,1544.40,456.40C1549.97,464.28,1555.53,569.82,1561.10,579.08C1566.67,588.33,1572.23,501.29,1577.80,474.95C1583.37,448.61,1588.93,482.98,1594.50,501.02C1600.07,519.07,1605.63,520.80,1611.20,496.82C1616.77,472.85,1622.33,423.15,1627.90,441.88C1633.47,460.60,1639.03,547.73,1644.60,567.52C1650.17,587.32,1655.73,539.79,1661.30,505.57C1666.87,471.36,1672.43,450.46,1678.00,465.85C1683.57,481.24,1689.13,532.93,1694.70,549.67C1700.27,566.42,1705.83,548.23,1711.40,513.27C1716.97,478.32,1722.53,426.60,1728.10,439.25C1733.67,451.90,1739.23,528.93,1744.80,561.40C1750.37,593.87,1755.93,581.79,1761.50,558.08C1767.07,534.36,1772.63,499.02,1778.20,473.55C1783.77,448.08,1789.33,432.48,1794.90,451.85C1800.47,471.22,1806.03,525.57,1811.60,554.92C1817.17,584.28,1822.73,588.64,1828.30,569.98C1833.87,551.31,1839.43,509.63,1845.00,467.95" fill="none" stroke="#e5e5e5" stroke-width="1"/></svg>
<div class="t" style="left:358.5px;transform:translateX(-50%);top:629px;font-size:12px;line-height:12px;color:#a1a1a1;-webkit-text-stroke:0.2px #a1a1a1;letter-spacing:0.15px;">Apr 2</div>
<div class="t" style="left:425.9px;transform:translateX(-50%);top:629px;font-size:12px;line-height:12px;color:#a1a1a1;-webkit-text-stroke:0.2px #a1a1a1;letter-spacing:0.15px;">Apr 6</div>
<div class="t" style="left:493.3px;transform:translateX(-50%);top:629px;font-size:12px;line-height:12px;color:#a1a1a1;-webkit-text-stroke:0.2px #a1a1a1;letter-spacing:0.15px;">Apr 10</div>
<div class="t" style="left:560.7px;transform:translateX(-50%);top:629px;font-size:12px;line-height:12px;color:#a1a1a1;-webkit-text-stroke:0.2px #a1a1a1;letter-spacing:0.15px;">Apr 14</div>
<div class="t" style="left:628.1px;transform:translateX(-50%);top:629px;font-size:12px;line-height:12px;color:#a1a1a1;-webkit-text-stroke:0.2px #a1a1a1;letter-spacing:0.15px;">Apr 18</div>
<div class="t" style="left:712.35px;transform:translateX(-50%);top:629px;font-size:12px;line-height:12px;color:#a1a1a1;-webkit-text-stroke:0.2px #a1a1a1;letter-spacing:0.15px;">Apr 23</div>
<div class="t" style="left:796.6px;transform:translateX(-50%);top:629px;font-size:12px;line-height:12px;color:#a1a1a1;-webkit-text-stroke:0.2px #a1a1a1;letter-spacing:0.15px;">Apr 28</div>
<div class="t" style="left:880.85px;transform:translateX(-50%);top:629px;font-size:12px;line-height:12px;color:#a1a1a1;-webkit-text-stroke:0.2px #a1a1a1;letter-spacing:0.15px;">May 3</div>
<div class="t" style="left:948.25px;transform:translateX(-50%);top:629px;font-size:12px;line-height:12px;color:#a1a1a1;-webkit-text-stroke:0.2px #a1a1a1;letter-spacing:0.15px;">May 7</div>
<div class="t" style="left:1032.5px;transform:translateX(-50%);top:629px;font-size:12px;line-height:12px;color:#a1a1a1;-webkit-text-stroke:0.2px #a1a1a1;letter-spacing:0.15px;">May 12</div>
<div class="t" style="left:1116.75px;transform:translateX(-50%);top:629px;font-size:12px;line-height:12px;color:#a1a1a1;-webkit-text-stroke:0.2px #a1a1a1;letter-spacing:0.15px;">May 17</div>
<div class="t" style="left:1184.15px;transform:translateX(-50%);top:629px;font-size:12px;line-height:12px;color:#a1a1a1;-webkit-text-stroke:0.2px #a1a1a1;letter-spacing:0.15px;">May 21</div>
<div class="t" style="left:1234.7px;transform:translateX(-50%);top:629px;font-size:12px;line-height:12px;color:#a1a1a1;-webkit-text-stroke:0.2px #a1a1a1;letter-spacing:0.15px;">May 24</div>
<div class="t" style="left:1302.1px;transform:translateX(-50%);top:629px;font-size:12px;line-height:12px;color:#a1a1a1;-webkit-text-stroke:0.2px #a1a1a1;letter-spacing:0.15px;">May 28</div>
<div class="t" style="left:1369.5px;transform:translateX(-50%);top:629px;font-size:12px;line-height:12px;color:#a1a1a1;-webkit-text-stroke:0.2px #a1a1a1;letter-spacing:0.15px;">Jun 1</div>
<div class="t" style="left:1436.9px;transform:translateX(-50%);top:629px;font-size:12px;line-height:12px;color:#a1a1a1;-webkit-text-stroke:0.2px #a1a1a1;letter-spacing:0.15px;">Jun 5</div>
<div class="t" style="left:1504.3px;transform:translateX(-50%);top:629px;font-size:12px;line-height:12px;color:#a1a1a1;-webkit-text-stroke:0.2px #a1a1a1;letter-spacing:0.15px;">Jun 9</div>
<div class="t" style="left:1588.55px;transform:translateX(-50%);top:629px;font-size:12px;line-height:12px;color:#a1a1a1;-webkit-text-stroke:0.2px #a1a1a1;letter-spacing:0.15px;">Jun 14</div>
<div class="t" style="left:1672.8px;transform:translateX(-50%);top:629px;font-size:12px;line-height:12px;color:#a1a1a1;-webkit-text-stroke:0.2px #a1a1a1;letter-spacing:0.15px;">Jun 19</div>
<div class="t" style="left:1757.05px;transform:translateX(-50%);top:629px;font-size:12px;line-height:12px;color:#a1a1a1;-webkit-text-stroke:0.2px #a1a1a1;letter-spacing:0.15px;">Jun 24</div>
<div class="t" style="right:57.35px;top:629px;font-size:12px;line-height:12px;color:#a1a1a1;-webkit-text-stroke:0.2px #a1a1a1;letter-spacing:0.15px;">Jun 30</div>
<div class="r" style="left:312px;top:700px;width:505px;height:36px;background:#262626;border-radius:10px;"></div>
<div class="r" style="left:315px;top:703px;width:66px;height:30px;background:#2d2d2d;border:1px solid #3b3b3b;box-sizing:border-box;border-radius:8px;"></div>
<div class="t" style="left:324px;top:711px;font-size:14px;line-height:14px;color:#fafafa;-webkit-text-stroke:0.45px #fafafa;letter-spacing:0.517px;">Outline</div>
<div class="t" style="left:390px;top:711px;font-size:14px;line-height:14px;color:#a1a1a1;-webkit-text-stroke:0.45px #a1a1a1;letter-spacing:0.3px;">Past Performance</div>
<div class="r" style="left:513px;top:708px;width:20px;height:20px;background:#404040;border-radius:10px;"></div>
<div class="t" style="left:523px;transform:translateX(-50%);top:712px;font-size:12px;line-height:12px;color:#fafafa;-webkit-text-stroke:0.35px #fafafa;letter-spacing:0.35px;">3</div>
<div class="t" style="left:551.5px;top:711px;font-size:14px;line-height:14px;color:#a1a1a1;-webkit-text-stroke:0.45px #a1a1a1;letter-spacing:0.058px;">Key Personnel</div>
<div class="r" style="left:649px;top:708px;width:20px;height:20px;background:#404040;border-radius:10px;"></div>
<div class="t" style="left:659px;transform:translateX(-50%);top:712px;font-size:12px;line-height:12px;color:#fafafa;-webkit-text-stroke:0.35px #fafafa;letter-spacing:0.35px;">2</div>
<div class="t" style="left:687.5px;top:711px;font-size:14px;line-height:14px;color:#a1a1a1;-webkit-text-stroke:0.45px #a1a1a1;letter-spacing:0.286px;">Focus Documents</div>
<div class="r" style="left:1559px;top:702px;width:197px;height:32px;background:#121212;border:1px solid #2c2c2c;box-sizing:border-box;border-radius:8px;"></div>
<svg class="ic" style="left:1570px;top:710px;width:16px;height:16px;" viewBox="0 0 24 24" fill="none" stroke="#fafafa" stroke-width="2" stroke-linecap="round" stroke-linejoin="round"><path d="M4 4m0 2a2 2 0 0 1 2 -2h12a2 2 0 0 1 2 2v12a2 2 0 0 1 -2 2h-12a2 2 0 0 1 -2 -2z"/><path d="M12 4l0 16"/></svg>
<div class="t" style="left:1592.5px;top:711px;font-size:14px;line-height:14px;color:#fafafa;-webkit-text-stroke:0.45px #fafafa;letter-spacing:0.356px;">Customize Columns</div>
<svg class="ic" style="left:1729px;top:710px;width:16px;height:16px;" viewBox="0 0 24 24" fill="none" stroke="#fafafa" stroke-width="2" stroke-linecap="round" stroke-linejoin="round"><path d="M6 9l6 6l6 -6"/></svg>
<div class="r" style="left:1764px;top:702px;width:124px;height:32px;background:#121212;border:1px solid #2c2c2c;box-sizing:border-box;border-radius:8px;"></div>
<svg class="ic" style="left:1775px;top:710px;width:16px;height:16px;" viewBox="0 0 24 24" fill="none" stroke="#fafafa" stroke-width="2" stroke-linecap="round" stroke-linejoin="round"><path d="M12 5l0 14"/><path d="M5 12l14 0"/></svg>
<div class="t" style="left:1798px;top:711px;font-size:14px;line-height:14px;color:#fafafa;-webkit-text-stroke:0.45px #fafafa;letter-spacing:0.4px;">Add Section</div>
<div class="r" style="left:312px;top:760px;width:1576px;height:572px;border:1px solid #262626;box-sizing:border-box;border-radius:10px;"></div>
<div class="r" style="left:313px;top:761px;width:1574px;height:41px;background:#262626;border-radius:9px 9px 0 0;"></div>
<div class="r" style="left:372px;top:773px;width:16px;height:16px;border:1px solid #3a3a3a;box-sizing:border-box;border-radius:4px;background:#2b2b2b;"></div>
<div class="t" style="left:404px;top:774px;font-size:14px;line-height:14px;color:#fafafa;-webkit-text-stroke:0.45px #fafafa;letter-spacing:0.2px;">Header</div>
<div class="t" style="left:892px;top:774px;font-size:14px;line-height:14px;color:#fafafa;-webkit-text-stroke:0.45px #fafafa;letter-spacing:0.291px;">Section Type</div>
<div class="t" style="left:1123.5px;top:774px;font-size:14px;line-height:14px;color:#fafafa;-webkit-text-stroke:0.45px #fafafa;letter-spacing:0.54px;">Status</div>
<div class="t" style="left:1362px;top:774px;font-size:14px;line-height:14px;color:#fafafa;-webkit-text-stroke:0.45px #fafafa;letter-spacing:0.48px;">Target</div>
<div class="t" style="left:1500.5px;top:774px;font-size:14px;line-height:14px;color:#fafafa;-webkit-text-stroke:0.45px #fafafa;letter-spacing:0.4px;">Limit</div>
<div class="t" style="left:1548.5px;top:774px;font-size:14px;line-height:14px;color:#fafafa;-webkit-text-stroke:0.45px #fafafa;letter-spacing:0.057px;">Reviewer</div>
<svg class="ic" style="left:329px;top:822px;width:12px;height:12px;" viewBox="0 0 24 24" fill="none" stroke="#a1a1a1" stroke-width="2" stroke-linecap="round" stroke-linejoin="round"><path d="M9 5m-1 0a1 1 0 1 0 2 0a1 1 0 1 0 -2 0"/><path d="M9 12m-1 0a1 1 0 1 0 2 0a1 1 0 1 0 -2 0"/><path d="M9 19m-1 0a1 1 0 1 0 2 0a1 1 0 1 0 -2 0"/><path d="M15 5m-1 0a1 1 0 1 0 2 0a1 1 0 1 0 -2 0"/><path d="M15 12m-1 0a1 1 0 1 0 2 0a1 1 0 1 0 -2 0"/><path d="M15 19m-1 0a1 1 0 1 0 2 0a1 1 0 1 0 -2 0"/></svg>
<div class="r" style="left:372px;top:820px;width:16px;height:16px;border:1px solid #3d3d3d;box-sizing:border-box;border-radius:4px;background:#141414;"></div>
<div class="t" style="left:404px;top:821px;font-size:14px;line-height:14px;color:#fafafa;-webkit-text-stroke:0.45px #fafafa;letter-spacing:0.139px;">Cover page</div>
<div class="r" style="left:891px;top:817px;width:78px;height:22px;border:1px solid #2c2c2c;box-sizing:border-box;border-radius:8px;"></div>
<div class="t" style="left:898.5px;top:822px;font-size:12px;line-height:12px;color:#a1a1a1;-webkit-text-stroke:0.35px #a1a1a1;letter-spacing:0.167px;">Cover page</div>
<div class="r" style="left:1123px;top:817px;width:88px;height:22px;border:1px solid #2c2c2c;box-sizing:border-box;border-radius:8px;"></div>
<svg class="ic" style="left:1130px;top:822px;width:12px;height:12px;" viewBox="0 0 24 24" fill="none" stroke="#a1a1a1" stroke-width="2" stroke-linecap="round" stroke-linejoin="round"><path d="M12 6l0 -3"/><path d="M16.25 7.75l0.9 -0.9"/><path d="M18 12l3 0"/><path d="M16.25 16.25l0.9 0.9"/><path d="M12 18l0 3"/><path d="M7.75 16.25l-0.9 0.9"/><path d="M6 12l-3 0"/><path d="M7.75 7.75l-0.9 -0.9"/></svg>
<div class="t" style="left:1146px;top:822px;font-size:12px;line-height:12px;color:#a1a1a1;-webkit-text-stroke:0.35px #a1a1a1;letter-spacing:0.156px;">In Process</div>
<div class="t" style="right:577.65px;top:821px;font-size:14px;line-height:14px;color:#fafafa;-webkit-text-stroke:0.45px #fafafa;letter-spacing:0.35px;">18</div>
<div class="t" style="right:449.65px;top:821px;font-size:14px;line-height:14px;color:#fafafa;-webkit-text-stroke:0.45px #fafafa;letter-spacing:0.35px;">5</div>
<div class="t" style="left:1549px;top:821px;font-size:14px;line-height:14px;color:#fafafa;-webkit-text-stroke:0.2px #fafafa;letter-spacing:-0.044px;">Eddie Lake</div>
<svg class="ic" style="left:1826px;top:820px;width:16px;height:16px;" viewBox="0 0 24 24" fill="none" stroke="#fafafa" stroke-width="2" stroke-linecap="round" stroke-linejoin="round"><path d="M12 12m-1 0a1 1 0 1 0 2 0a1 1 0 1 0 -2 0"/><path d="M12 19m-1 0a1 1 0 1 0 2 0a1 1 0 1 0 -2 0"/><path d="M12 5m-1 0a1 1 0 1 0 2 0a1 1 0 1 0 -2 0"/></svg>
<div class="r" style="left:313px;top:854px;width:1574px;height:1px;background:#262626;"></div>
<svg class="ic" style="left:329px;top:875px;width:12px;height:12px;" viewBox="0 0 24 24" fill="none" stroke="#a1a1a1" stroke-width="2" stroke-linecap="round" stroke-linejoin="round"><path d="M9 5m-1 0a1 1 0 1 0 2 0a1 1 0 1 0 -2 0"/><path d="M9 12m-1 0a1 1 0 1 0 2 0a1 1 0 1 0 -2 0"/><path d="M9 19m-1 0a1 1 0 1 0 2 0a1 1 0 1 0 -2 0"/><path d="M15 5m-1 0a1 1 0 1 0 2 0a1 1 0 1 0 -2 0"/><path d="M15 12m-1 0a1 1 0 1 0 2 0a1 1 0 1 0 -2 0"/><path d="M15 19m-1 0a1 1 0 1 0 2 0a1 1 0 1 0 -2 0"/></svg>
<div class="r" style="left:372px;top:873px;width:16px;height:16px;border:1px solid #3d3d3d;box-sizing:border-box;border-radius:4px;background:#141414;"></div>
<div class="t" style="left:404px;top:874px;font-size:14px;line-height:14px;color:#fafafa;-webkit-text-stroke:0.45px #fafafa;letter-spacing:0.438px;">Table of contents</div>
<div class="r" style="left:891px;top:870px;width:111px;height:22px;border:1px solid #2c2c2c;box-sizing:border-box;border-radius:8px;"></div>
<div class="t" style="left:898.5px;top:875px;font-size:12px;line-height:12px;color:#a1a1a1;-webkit-text-stroke:0.35px #a1a1a1;letter-spacing:0.344px;">Table of contents</div>
<div class="r" style="left:1123px;top:870px;width:59px;height:22px;border:1px solid #2c2c2c;box-sizing:border-box;border-radius:8px;"></div>
<svg class="ic" style="left:1130px;top:875px;width:12px;height:12px;" viewBox="0 0 24 24" fill="#05df72" stroke="none"><path d="M17 3.34a10 10 0 1 1 -14.995 8.984l-.005 -.324l.005 -.324a10 10 0 0 1 14.995 -8.336zm-1.293 5.953a1 1 0 0 0 -1.32 -.083l-.094 .083l-3.293 3.292l-1.293 -1.292l-.094 -.083a1 1 0 0 0 -1.403 1.403l.083 .094l2 2l.094 .083a1 1 0 0 0 1.226 0l.094 -.083l4 -4l.083 -.094a1 1 0 0 0 -.083 -1.32z"/></svg>
<div class="t" style="left:1146px;top:875px;font-size:12px;line-height:12px;color:#a1a1a1;-webkit-text-stroke:0.35px #a1a1a1;letter-spacing:0.1px;">Done</div>
<div class="t" style="right:577.65px;top:874px;font-size:14px;line-height:14px;color:#fafafa;-webkit-text-stroke:0.45px #fafafa;letter-spacing:0.35px;">29</div>
<div class="t" style="right:449.65px;top:874px;font-size:14px;line-height:14px;color:#fafafa;-webkit-text-stroke:0.45px #fafafa;letter-spacing:0.35px;">24</div>
<div class="t" style="left:1549px;top:874px;font-size:14px;line-height:14px;color:#fafafa;-webkit-text-stroke:0.2px #fafafa;letter-spacing:-0.044px;">Eddie Lake</div>
<svg class="ic" style="left:1826px;top:873px;width:16px;height:16px;" viewBox="0 0 24 24" fill="none" stroke="#fafafa" stroke-width="2" stroke-linecap="round" stroke-linejoin="round"><path d="M12 12m-1 0a1 1 0 1 0 2 0a1 1 0 1 0 -2 0"/><path d="M12 19m-1 0a1 1 0 1 0 2 0a1 1 0 1 0 -2 0"/><path d="M12 5m-1 0a1 1 0 1 0 2 0a1 1 0 1 0 -2 0"/></svg>
<div class="r" style="left:313px;top:907px;width:1574px;height:1px;background:#262626;"></div>
<svg class="ic" style="left:329px;top:928px;width:12px;height:12px;" viewBox="0 0 24 24" fill="none" stroke="#a1a1a1" stroke-width="2" stroke-linecap="round" stroke-linejoin="round"><path d="M9 5m-1 0a1 1 0 1 0 2 0a1 1 0 1 0 -2 0"/><path d="M9 12m-1 0a1 1 0 1 0 2 0a1 1 0 1 0 -2 0"/><path d="M9 19m-1 0a1 1 0 1 0 2 0a1 1 0 1 0 -2 0"/><path d="M15 5m-1 0a1 1 0 1 0 2 0a1 1 0 1 0 -2 0"/><path d="M15 12m-1 0a1 1 0 1 0 2 0a1 1 0 1 0 -2 0"/><path d="M15 19m-1 0a1 1 0 1 0 2 0a1 1 0 1 0 -2 0"/></svg>
<div class="r" style="left:372px;top:926px;width:16px;height:16px;border:1px solid #3d3d3d;box-sizing:border-box;border-radius:4px;background:#141414;"></div>
<div class="t" style="left:404px;top:927px;font-size:14px;line-height:14px;color:#fafafa;-webkit-text-stroke:0.45px #fafafa;letter-spacing:0.344px;">Executive summary</div>
<div class="r" style="left:891px;top:923px;width:66px;height:22px;border:1px solid #2c2c2c;box-sizing:border-box;border-radius:8px;"></div>
<div class="t" style="left:898.5px;top:928px;font-size:12px;line-height:12px;color:#a1a1a1;-webkit-text-stroke:0.35px #a1a1a1;letter-spacing:0.312px;">Narrative</div>
<div class="r" style="left:1123px;top:923px;width:59px;height:22px;border:1px solid #2c2c2c;box-sizing:border-box;border-radius:8px;"></div>
<svg class="ic" style="left:1130px;top:928px;width:12px;height:12px;" viewBox="0 0 24 24" fill="#05df72" stroke="none"><path d="M17 3.34a10 10 0 1 1 -14.995 8.984l-.005 -.324l.005 -.324a10 10 0 0 1 14.995 -8.336zm-1.293 5.953a1 1 0 0 0 -1.32 -.083l-.094 .083l-3.293 3.292l-1.293 -1.292l-.094 -.083a1 1 0 0 0 -1.403 1.403l.083 .094l2 2l.094 .083a1 1 0 0 0 1.226 0l.094 -.083l4 -4l.083 -.094a1 1 0 0 0 -.083 -1.32z"/></svg>
<div class="t" style="left:1146px;top:928px;font-size:12px;line-height:12px;color:#a1a1a1;-webkit-text-stroke:0.35px #a1a1a1;letter-spacing:0.1px;">Done</div>
<div class="t" style="right:577.65px;top:927px;font-size:14px;line-height:14px;color:#fafafa;-webkit-text-stroke:0.45px #fafafa;letter-spacing:0.35px;">10</div>
<div class="t" style="right:449.65px;top:927px;font-size:14px;line-height:14px;color:#fafafa;-webkit-text-stroke:0.45px #fafafa;letter-spacing:0.35px;">13</div>
<div class="t" style="left:1549px;top:927px;font-size:14px;line-height:14px;color:#fafafa;-webkit-text-stroke:0.2px #fafafa;letter-spacing:-0.044px;">Eddie Lake</div>
<svg class="ic" style="left:1826px;top:926px;width:16px;height:16px;" viewBox="0 0 24 24" fill="none" stroke="#fafafa" stroke-width="2" stroke-linecap="round" stroke-linejoin="round"><path d="M12 12m-1 0a1 1 0 1 0 2 0a1 1 0 1 0 -2 0"/><path d="M12 19m-1 0a1 1 0 1 0 2 0a1 1 0 1 0 -2 0"/><path d="M12 5m-1 0a1 1 0 1 0 2 0a1 1 0 1 0 -2 0"/></svg>
<div class="r" style="left:313px;top:960px;width:1574px;height:1px;background:#262626;"></div>
<svg class="ic" style="left:329px;top:981px;width:12px;height:12px;" viewBox="0 0 24 24" fill="none" stroke="#a1a1a1" stroke-width="2" stroke-linecap="round" stroke-linejoin="round"><path d="M9 5m-1 0a1 1 0 1 0 2 0a1 1 0 1 0 -2 0"/><path d="M9 12m-1 0a1 1 0 1 0 2 0a1 1 0 1 0 -2 0"/><path d="M9 19m-1 0a1 1 0 1 0 2 0a1 1 0 1 0 -2 0"/><path d="M15 5m-1 0a1 1 0 1 0 2 0a1 1 0 1 0 -2 0"/><path d="M15 12m-1 0a1 1 0 1 0 2 0a1 1 0 1 0 -2 0"/><path d="M15 19m-1 0a1 1 0 1 0 2 0a1 1 0 1 0 -2 0"/></svg>
<div class="r" style="left:372px;top:979px;width:16px;height:16px;border:1px solid #3d3d3d;box-sizing:border-box;border-radius:4px;background:#141414;"></div>
<div class="t" style="left:404px;top:980px;font-size:14px;line-height:14px;color:#fafafa;-webkit-text-stroke:0.45px #fafafa;letter-spacing:0.312px;">Technical approach</div>
<div class="r" style="left:891px;top:976px;width:66px;height:22px;border:1px solid #2c2c2c;box-sizing:border-box;border-radius:8px;"></div>
<div class="t" style="left:898.5px;top:981px;font-size:12px;line-height:12px;color:#a1a1a1;-webkit-text-stroke:0.35px #a1a1a1;letter-spacing:0.312px;">Narrative</div>
<div class="r" style="left:1123px;top:976px;width:59px;height:22px;border:1px solid #2c2c2c;box-sizing:border-box;border-radius:8px;"></div>
<svg class="ic" style="left:1130px;top:981px;width:12px;height:12px;" viewBox="0 0 24 24" fill="#05df72" stroke="none"><path d="M17 3.34a10 10 0 1 1 -14.995 8.984l-.005 -.324l.005 -.324a10 10 0 0 1 14.995 -8.336zm-1.293 5.953a1 1 0 0 0 -1.32 -.083l-.094 .083l-3.293 3.292l-1.293 -1.292l-.094 -.083a1 1 0 0 0 -1.403 1.403l.083 .094l2 2l.094 .083a1 1 0 0 0 1.226 0l.094 -.083l4 -4l.083 -.094a1 1 0 0 0 -.083 -1.32z"/></svg>
<div class="t" style="left:1146px;top:981px;font-size:12px;line-height:12px;color:#a1a1a1;-webkit-text-stroke:0.35px #a1a1a1;letter-spacing:0.1px;">Done</div>
<div class="t" style="right:577.65px;top:980px;font-size:14px;line-height:14px;color:#fafafa;-webkit-text-stroke:0.45px #fafafa;letter-spacing:0.35px;">27</div>
<div class="t" style="right:449.65px;top:980px;font-size:14px;line-height:14px;color:#fafafa;-webkit-text-stroke:0.45px #fafafa;letter-spacing:0.35px;">23</div>
<div class="t" style="left:1549px;top:980px;font-size:14px;line-height:14px;color:#fafafa;-webkit-text-stroke:0.2px #fafafa;letter-spacing:0.25px;">Jamik Tashpulatov</div>
<svg class="ic" style="left:1826px;top:979px;width:16px;height:16px;" viewBox="0 0 24 24" fill="none" stroke="#fafafa" stroke-width="2" stroke-linecap="round" stroke-linejoin="round"><path d="M12 12m-1 0a1 1 0 1 0 2 0a1 1 0 1 0 -2 0"/><path d="M12 19m-1 0a1 1 0 1 0 2 0a1 1 0 1 0 -2 0"/><path d="M12 5m-1 0a1 1 0 1 0 2 0a1 1 0 1 0 -2 0"/></svg>
<div class="r" style="left:313px;top:1013px;width:1574px;height:1px;background:#262626;"></div>
<svg class="ic" style="left:329px;top:1034px;width:12px;height:12px;" viewBox="0 0 24 24" fill="none" stroke="#a1a1a1" stroke-width="2" stroke-linecap="round" stroke-linejoin="round"><path d="M9 5m-1 0a1 1 0 1 0 2 0a1 1 0 1 0 -2 0"/><path d="M9 12m-1 0a1 1 0 1 0 2 0a1 1 0 1 0 -2 0"/><path d="M9 19m-1 0a1 1 0 1 0 2 0a1 1 0 1 0 -2 0"/><path d="M15 5m-1 0a1 1 0 1 0 2 0a1 1 0 1 0 -2 0"/><path d="M15 12m-1 0a1 1 0 1 0 2 0a1 1 0 1 0 -2 0"/><path d="M15 19m-1 0a1 1 0 1 0 2 0a1 1 0 1 0 -2 0"/></svg>
<div class="r" style="left:372px;top:1032px;width:16px;height:16px;border:1px solid #3d3d3d;box-sizing:border-box;border-radius:4px;background:#141414;"></div>
<div class="t" style="left:404px;top:1033px;font-size:14px;line-height:14px;color:#fafafa;-webkit-text-stroke:0.45px #fafafa;letter-spacing:0.12px;">Design</div>
<div class="r" style="left:891px;top:1029px;width:66px;height:22px;border:1px solid #2c2c2c;box-sizing:border-box;border-radius:8px;"></div>
<div class="t" style="left:898.5px;top:1034px;font-size:12px;line-height:12px;color:#a1a1a1;-webkit-text-stroke:0.35px #a1a1a1;letter-spacing:0.312px;">Narrative</div>
<div class="r" style="left:1123px;top:1029px;width:88px;height:22px;border:1px solid #2c2c2c;box-sizing:border-box;border-radius:8px;"></div>
<svg class="ic" style="left:1130px;top:1034px;width:12px;height:12px;" viewBox="0 0 24 24" fill="none" stroke="#a1a1a1" stroke-width="2" stroke-linecap="round" stroke-linejoin="round"><path d="M12 6l0 -3"/><path d="M16.25 7.75l0.9 -0.9"/><path d="M18 12l3 0"/><path d="M16.25 16.25l0.9 0.9"/><path d="M12 18l0 3"/><path d="M7.75 16.25l-0.9 0.9"/><path d="M6 12l-3 0"/><path d="M7.75 7.75l-0.9 -0.9"/></svg>
<div class="t" style="left:1146px;top:1034px;font-size:12px;line-height:12px;color:#a1a1a1;-webkit-text-stroke:0.35px #a1a1a1;letter-spacing:0.156px;">In Process</div>
<div class="t" style="right:577.65px;top:1033px;font-size:14px;line-height:14px;color:#fafafa;-webkit-text-stroke:0.45px #fafafa;letter-spacing:0.35px;">2</div>
<div class="t" style="right:449.65px;top:1033px;font-size:14px;line-height:14px;color:#fafafa;-webkit-text-stroke:0.45px #fafafa;letter-spacing:0.35px;">16</div>
<div class="t" style="left:1549px;top:1033px;font-size:14px;line-height:14px;color:#fafafa;-webkit-text-stroke:0.2px #fafafa;letter-spacing:0.25px;">Jamik Tashpulatov</div>
<svg class="ic" style="left:1826px;top:1032px;width:16px;height:16px;" viewBox="0 0 24 24" fill="none" stroke="#fafafa" stroke-width="2" stroke-linecap="round" stroke-linejoin="round"><path d="M12 12m-1 0a1 1 0 1 0 2 0a1 1 0 1 0 -2 0"/><path d="M12 19m-1 0a1 1 0 1 0 2 0a1 1 0 1 0 -2 0"/><path d="M12 5m-1 0a1 1 0 1 0 2 0a1 1 0 1 0 -2 0"/></svg>
<div class="r" style="left:313px;top:1066px;width:1574px;height:1px;background:#262626;"></div>
<svg class="ic" style="left:329px;top:1087px;width:12px;height:12px;" viewBox="0 0 24 24" fill="none" stroke="#a1a1a1" stroke-width="2" stroke-linecap="round" stroke-linejoin="round"><path d="M9 5m-1 0a1 1 0 1 0 2 0a1 1 0 1 0 -2 0"/><path d="M9 12m-1 0a1 1 0 1 0 2 0a1 1 0 1 0 -2 0"/><path d="M9 19m-1 0a1 1 0 1 0 2 0a1 1 0 1 0 -2 0"/><path d="M15 5m-1 0a1 1 0 1 0 2 0a1 1 0 1 0 -2 0"/><path d="M15 12m-1 0a1 1 0 1 0 2 0a1 1 0 1 0 -2 0"/><path d="M15 19m-1 0a1 1 0 1 0 2 0a1 1 0 1 0 -2 0"/></svg>
<div class="r" style="left:372px;top:1085px;width:16px;height:16px;border:1px solid #3d3d3d;box-sizing:border-box;border-radius:4px;background:#141414;"></div>
<div class="t" style="left:404px;top:1086px;font-size:14px;line-height:14px;color:#fafafa;-webkit-text-stroke:0.45px #fafafa;letter-spacing:0.473px;">Capabilities</div>
<div class="r" style="left:891px;top:1082px;width:66px;height:22px;border:1px solid #2c2c2c;box-sizing:border-box;border-radius:8px;"></div>
<div class="t" style="left:898.5px;top:1087px;font-size:12px;line-height:12px;color:#a1a1a1;-webkit-text-stroke:0.35px #a1a1a1;letter-spacing:0.312px;">Narrative</div>
<div class="r" style="left:1123px;top:1082px;width:88px;height:22px;border:1px solid #2c2c2c;box-sizing:border-box;border-radius:8px;"></div>
<svg class="ic" style="left:1130px;top:1087px;width:12px;height:12px;" viewBox="0 0 24 24" fill="none" stroke="#a1a1a1" stroke-width="2" stroke-linecap="round" stroke-linejoin="round"><path d="M12 6l0 -3"/><path d="M16.25 7.75l0.9 -0.9"/><path d="M18 12l3 0"/><path d="M16.25 16.25l0.9 0.9"/><path d="M12 18l0 3"/><path d="M7.75 16.25l-0.9 0.9"/><path d="M6 12l-3 0"/><path d="M7.75 7.75l-0.9 -0.9"/></svg>
<div class="t" style="left:1146px;top:1087px;font-size:12px;line-height:12px;color:#a1a1a1;-webkit-text-stroke:0.35px #a1a1a1;letter-spacing:0.156px;">In Process</div>
<div class="t" style="right:577.65px;top:1086px;font-size:14px;line-height:14px;color:#fafafa;-webkit-text-stroke:0.45px #fafafa;letter-spacing:0.35px;">20</div>
<div class="t" style="right:449.65px;top:1086px;font-size:14px;line-height:14px;color:#fafafa;-webkit-text-stroke:0.45px #fafafa;letter-spacing:0.35px;">8</div>
<div class="t" style="left:1549px;top:1086px;font-size:14px;line-height:14px;color:#fafafa;-webkit-text-stroke:0.2px #fafafa;letter-spacing:0.25px;">Jamik Tashpulatov</div>
<svg class="ic" style="left:1826px;top:1085px;width:16px;height:16px;" viewBox="0 0 24 24" fill="none" stroke="#fafafa" stroke-width="2" stroke-linecap="round" stroke-linejoin="round"><path d="M12 12m-1 0a1 1 0 1 0 2 0a1 1 0 1 0 -2 0"/><path d="M12 19m-1 0a1 1 0 1 0 2 0a1 1 0 1 0 -2 0"/><path d="M12 5m-1 0a1 1 0 1 0 2 0a1 1 0 1 0 -2 0"/></svg>
<div class="r" style="left:313px;top:1119px;width:1574px;height:1px;background:#262626;"></div>
<svg class="ic" style="left:329px;top:1140px;width:12px;height:12px;" viewBox="0 0 24 24" fill="none" stroke="#a1a1a1" stroke-width="2" stroke-linecap="round" stroke-linejoin="round"><path d="M9 5m-1 0a1 1 0 1 0 2 0a1 1 0 1 0 -2 0"/><path d="M9 12m-1 0a1 1 0 1 0 2 0a1 1 0 1 0 -2 0"/><path d="M9 19m-1 0a1 1 0 1 0 2 0a1 1 0 1 0 -2 0"/><path d="M15 5m-1 0a1 1 0 1 0 2 0a1 1 0 1 0 -2 0"/><path d="M15 12m-1 0a1 1 0 1 0 2 0a1 1 0 1 0 -2 0"/><path d="M15 19m-1 0a1 1 0 1 0 2 0a1 1 0 1 0 -2 0"/></svg>
<div class="r" style="left:372px;top:1138px;width:16px;height:16px;border:1px solid #3d3d3d;box-sizing:border-box;border-radius:4px;background:#141414;"></div>
<div class="t" style="left:404px;top:1139px;font-size:14px;line-height:14px;color:#fafafa;-webkit-text-stroke:0.45px #fafafa;letter-spacing:0.478px;">Integration with existing systems</div>
<div class="r" style="left:891px;top:1135px;width:66px;height:22px;border:1px solid #2c2c2c;box-sizing:border-box;border-radius:8px;"></div>
<div class="t" style="left:898.5px;top:1140px;font-size:12px;line-height:12px;color:#a1a1a1;-webkit-text-stroke:0.35px #a1a1a1;letter-spacing:0.312px;">Narrative</div>
<div class="r" style="left:1123px;top:1135px;width:88px;height:22px;border:1px solid #2c2c2c;box-sizing:border-box;border-radius:8px;"></div>
<svg class="ic" style="left:1130px;top:1140px;width:12px;height:12px;" viewBox="0 0 24 24" fill="none" stroke="#a1a1a1" stroke-width="2" stroke-linecap="round" stroke-linejoin="round"><path d="M12 6l0 -3"/><path d="M16.25 7.75l0.9 -0.9"/><path d="M18 12l3 0"/><path d="M16.25 16.25l0.9 0.9"/><path d="M12 18l0 3"/><path d="M7.75 16.25l-0.9 0.9"/><path d="M6 12l-3 0"/><path d="M7.75 7.75l-0.9 -0.9"/></svg>
<div class="t" style="left:1146px;top:1140px;font-size:12px;line-height:12px;color:#a1a1a1;-webkit-text-stroke:0.35px #a1a1a1;letter-spacing:0.156px;">In Process</div>
<div class="t" style="right:577.65px;top:1139px;font-size:14px;line-height:14px;color:#fafafa;-webkit-text-stroke:0.45px #fafafa;letter-spacing:0.35px;">19</div>
<div class="t" style="right:449.65px;top:1139px;font-size:14px;line-height:14px;color:#fafafa;-webkit-text-stroke:0.45px #fafafa;letter-spacing:0.35px;">21</div>
<div class="t" style="left:1549px;top:1139px;font-size:14px;line-height:14px;color:#fafafa;-webkit-text-stroke:0.2px #fafafa;letter-spacing:0.25px;">Jamik Tashpulatov</div>
<svg class="ic" style="left:1826px;top:1138px;width:16px;height:16px;" viewBox="0 0 24 24" fill="none" stroke="#fafafa" stroke-width="2" stroke-linecap="round" stroke-linejoin="round"><path d="M12 12m-1 0a1 1 0 1 0 2 0a1 1 0 1 0 -2 0"/><path d="M12 19m-1 0a1 1 0 1 0 2 0a1 1 0 1 0 -2 0"/><path d="M12 5m-1 0a1 1 0 1 0 2 0a1 1 0 1 0 -2 0"/></svg>
<div class="r" style="left:313px;top:1172px;width:1574px;height:1px;background:#262626;"></div>
<svg class="ic" style="left:329px;top:1193px;width:12px;height:12px;" viewBox="0 0 24 24" fill="none" stroke="#a1a1a1" stroke-width="2" stroke-linecap="round" stroke-linejoin="round"><path d="M9 5m-1 0a1 1 0 1 0 2 0a1 1 0 1 0 -2 0"/><path d="M9 12m-1 0a1 1 0 1 0 2 0a1 1 0 1 0 -2 0"/><path d="M9 19m-1 0a1 1 0 1 0 2 0a1 1 0 1 0 -2 0"/><path d="M15 5m-1 0a1 1 0 1 0 2 0a1 1 0 1 0 -2 0"/><path d="M15 12m-1 0a1 1 0 1 0 2 0a1 1 0 1 0 -2 0"/><path d="M15 19m-1 0a1 1 0 1 0 2 0a1 1 0 1 0 -2 0"/></svg>
<div class="r" style="left:372px;top:1191px;width:16px;height:16px;border:1px solid #3d3d3d;box-sizing:border-box;border-radius:4px;background:#141414;"></div>
<div class="t" style="left:404px;top:1192px;font-size:14px;line-height:14px;color:#fafafa;-webkit-text-stroke:0.45px #fafafa;letter-spacing:0.35px;">Innovation and Advantages</div>
<div class="r" style="left:891px;top:1188px;width:66px;height:22px;border:1px solid #2c2c2c;box-sizing:border-box;border-radius:8px;"></div>
<div class="t" style="left:898.5px;top:1193px;font-size:12px;line-height:12px;color:#a1a1a1;-webkit-text-stroke:0.35px #a1a1a1;letter-spacing:0.312px;">Narrative</div>
<div class="r" style="left:1123px;top:1188px;width:59px;height:22px;border:1px solid #2c2c2c;box-sizing:border-box;border-radius:8px;"></div>
<svg class="ic" style="left:1130px;top:1193px;width:12px;height:12px;" viewBox="0 0 24 24" fill="#05df72" stroke="none"><path d="M17 3.34a10 10 0 1 1 -14.995 8.984l-.005 -.324l.005 -.324a10 10 0 0 1 14.995 -8.336zm-1.293 5.953a1 1 0 0 0 -1.32 -.083l-.094 .083l-3.293 3.292l-1.293 -1.292l-.094 -.083a1 1 0 0 0 -1.403 1.403l.083 .094l2 2l.094 .083a1 1 0 0 0 1.226 0l.094 -.083l4 -4l.083 -.094a1 1 0 0 0 -.083 -1.32z"/></svg>
<div class="t" style="left:1146px;top:1193px;font-size:12px;line-height:12px;color:#a1a1a1;-webkit-text-stroke:0.35px #a1a1a1;letter-spacing:0.1px;">Done</div>
<div class="t" style="right:577.65px;top:1192px;font-size:14px;line-height:14px;color:#fafafa;-webkit-text-stroke:0.45px #fafafa;letter-spacing:0.35px;">25</div>
<div class="t" style="right:449.65px;top:1192px;font-size:14px;line-height:14px;color:#fafafa;-webkit-text-stroke:0.45px #fafafa;letter-spacing:0.35px;">26</div>
<div class="r" style="left:1548px;top:1183px;width:152px;height:32px;background:#131313;border:1px solid #2c2c2c;box-sizing:border-box;border-radius:8px;"></div>
<div class="t" style="left:1561.5px;top:1192px;font-size:14px;line-height:14px;color:#a1a1a1;-webkit-text-stroke:0.2px #a1a1a1;letter-spacing:0.086px;">Assign reviewer</div>
<svg class="ic" style="left:1671px;top:1191px;width:16px;height:16px;" viewBox="0 0 24 24" fill="none" stroke="#a1a1a1" stroke-width="2" stroke-linecap="round" stroke-linejoin="round"><path d="M6 9l6 6l6 -6"/></svg>
<svg class="ic" style="left:1826px;top:1191px;width:16px;height:16px;" viewBox="0 0 24 24" fill="none" stroke="#fafafa" stroke-width="2" stroke-linecap="round" stroke-linejoin="round"><path d="M12 12m-1 0a1 1 0 1 0 2 0a1 1 0 1 0 -2 0"/><path d="M12 19m-1 0a1 1 0 1 0 2 0a1 1 0 1 0 -2 0"/><path d="M12 5m-1 0a1 1 0 1 0 2 0a1 1 0 1 0 -2 0"/></svg>
<div class="r" style="left:313px;top:1225px;width:1574px;height:1px;background:#262626;"></div>
<svg class="ic" style="left:329px;top:1246px;width:12px;height:12px;" viewBox="0 0 24 24" fill="none" stroke="#a1a1a1" stroke-width="2" stroke-linecap="round" stroke-linejoin="round"><path d="M9 5m-1 0a1 1 0 1 0 2 0a1 1 0 1 0 -2 0"/><path d="M9 12m-1 0a1 1 0 1 0 2 0a1 1 0 1 0 -2 0"/><path d="M9 19m-1 0a1 1 0 1 0 2 0a1 1 0 1 0 -2 0"/><path d="M15 5m-1 0a1 1 0 1 0 2 0a1 1 0 1 0 -2 0"/><path d="M15 12m-1 0a1 1 0 1 0 2 0a1 1 0 1 0 -2 0"/><path d="M15 19m-1 0a1 1 0 1 0 2 0a1 1 0 1 0 -2 0"/></svg>
<div class="r" style="left:372px;top:1244px;width:16px;height:16px;border:1px solid #3d3d3d;box-sizing:border-box;border-radius:4px;background:#141414;"></div>
<div class="t" style="left:404px;top:1245px;font-size:14px;line-height:14px;color:#fafafa;-webkit-text-stroke:0.45px #fafafa;letter-spacing:0.265px;">Overview of EMR's Innovative Solutions</div>
<div class="r" style="left:891px;top:1241px;width:114px;height:22px;border:1px solid #2c2c2c;box-sizing:border-box;border-radius:8px;"></div>
<div class="t" style="left:898.5px;top:1246px;font-size:12px;line-height:12px;color:#a1a1a1;-webkit-text-stroke:0.35px #a1a1a1;letter-spacing:0.406px;">Technical content</div>
<div class="r" style="left:1123px;top:1241px;width:59px;height:22px;border:1px solid #2c2c2c;box-sizing:border-box;border-radius:8px;"></div>
<svg class="ic" style="left:1130px;top:1246px;width:12px;height:12px;" viewBox="0 0 24 24" fill="#05df72" stroke="none"><path d="M17 3.34a10 10 0 1 1 -14.995 8.984l-.005 -.324l.005 -.324a10 10 0 0 1 14.995 -8.336zm-1.293 5.953a1 1 0 0 0 -1.32 -.083l-.094 .083l-3.293 3.292l-1.293 -1.292l-.094 -.083a1 1 0 0 0 -1.403 1.403l.083 .094l2 2l.094 .083a1 1 0 0 0 1.226 0l.094 -.083l4 -4l.083 -.094a1 1 0 0 0 -.083 -1.32z"/></svg>
<div class="t" style="left:1146px;top:1246px;font-size:12px;line-height:12px;color:#a1a1a1;-webkit-text-stroke:0.35px #a1a1a1;letter-spacing:0.1px;">Done</div>
<div class="t" style="right:577.65px;top:1245px;font-size:14px;line-height:14px;color:#fafafa;-webkit-text-stroke:0.45px #fafafa;letter-spacing:0.35px;">7</div>
<div class="t" style="right:449.65px;top:1245px;font-size:14px;line-height:14px;color:#fafafa;-webkit-text-stroke:0.45px #fafafa;letter-spacing:0.35px;">23</div>
<div class="r" style="left:1548px;top:1236px;width:152px;height:32px;background:#131313;border:1px solid #2c2c2c;box-sizing:border-box;border-radius:8px;"></div>
<div class="t" style="left:1561.5px;top:1245px;font-size:14px;line-height:14px;color:#a1a1a1;-webkit-text-stroke:0.2px #a1a1a1;letter-spacing:0.086px;">Assign reviewer</div>
<svg class="ic" style="left:1671px;top:1244px;width:16px;height:16px;" viewBox="0 0 24 24" fill="none" stroke="#a1a1a1" stroke-width="2" stroke-linecap="round" stroke-linejoin="round"><path d="M6 9l6 6l6 -6"/></svg>
<svg class="ic" style="left:1826px;top:1244px;width:16px;height:16px;" viewBox="0 0 24 24" fill="none" stroke="#fafafa" stroke-width="2" stroke-linecap="round" stroke-linejoin="round"><path d="M12 12m-1 0a1 1 0 1 0 2 0a1 1 0 1 0 -2 0"/><path d="M12 19m-1 0a1 1 0 1 0 2 0a1 1 0 1 0 -2 0"/><path d="M12 5m-1 0a1 1 0 1 0 2 0a1 1 0 1 0 -2 0"/></svg>
<div class="r" style="left:313px;top:1278px;width:1574px;height:1px;background:#262626;"></div>
<svg class="ic" style="left:329px;top:1299px;width:12px;height:12px;" viewBox="0 0 24 24" fill="none" stroke="#a1a1a1" stroke-width="2" stroke-linecap="round" stroke-linejoin="round"><path d="M9 5m-1 0a1 1 0 1 0 2 0a1 1 0 1 0 -2 0"/><path d="M9 12m-1 0a1 1 0 1 0 2 0a1 1 0 1 0 -2 0"/><path d="M9 19m-1 0a1 1 0 1 0 2 0a1 1 0 1 0 -2 0"/><path d="M15 5m-1 0a1 1 0 1 0 2 0a1 1 0 1 0 -2 0"/><path d="M15 12m-1 0a1 1 0 1 0 2 0a1 1 0 1 0 -2 0"/><path d="M15 19m-1 0a1 1 0 1 0 2 0a1 1 0 1 0 -2 0"/></svg>
<div class="r" style="left:372px;top:1297px;width:16px;height:16px;border:1px solid #3d3d3d;box-sizing:border-box;border-radius:4px;background:#141414;"></div>
<div class="t" style="left:404px;top:1298px;font-size:14px;line-height:14px;color:#fafafa;-webkit-text-stroke:0.45px #fafafa;letter-spacing:0.341px;">Advanced Algorithms and Machine Learning</div>
<div class="r" style="left:891px;top:1294px;width:66px;height:22px;border:1px solid #2c2c2c;box-sizing:border-box;border-radius:8px;"></div>
<div class="t" style="left:898.5px;top:1299px;font-size:12px;line-height:12px;color:#a1a1a1;-webkit-text-stroke:0.35px #a1a1a1;letter-spacing:0.312px;">Narrative</div>
<div class="r" style="left:1123px;top:1294px;width:59px;height:22px;border:1px solid #2c2c2c;box-sizing:border-box;border-radius:8px;"></div>
<svg class="ic" style="left:1130px;top:1299px;width:12px;height:12px;" viewBox="0 0 24 24" fill="#05df72" stroke="none"><path d="M17 3.34a10 10 0 1 1 -14.995 8.984l-.005 -.324l.005 -.324a10 10 0 0 1 14.995 -8.336zm-1.293 5.953a1 1 0 0 0 -1.32 -.083l-.094 .083l-3.293 3.292l-1.293 -1.292l-.094 -.083a1 1 0 0 0 -1.403 1.403l.083 .094l2 2l.094 .083a1 1 0 0 0 1.226 0l.094 -.083l4 -4l.083 -.094a1 1 0 0 0 -.083 -1.32z"/></svg>
<div class="t" style="left:1146px;top:1299px;font-size:12px;line-height:12px;color:#a1a1a1;-webkit-text-stroke:0.35px #a1a1a1;letter-spacing:0.1px;">Done</div>
<div class="t" style="right:577.65px;top:1298px;font-size:14px;line-height:14px;color:#fafafa;-webkit-text-stroke:0.45px #fafafa;letter-spacing:0.35px;">30</div>
<div class="t" style="right:449.65px;top:1298px;font-size:14px;line-height:14px;color:#fafafa;-webkit-text-stroke:0.45px #fafafa;letter-spacing:0.35px;">28</div>
<div class="r" style="left:1548px;top:1289px;width:152px;height:32px;background:#131313;border:1px solid #2c2c2c;box-sizing:border-box;border-radius:8px;"></div>
<div class="t" style="left:1561.5px;top:1298px;font-size:14px;line-height:14px;color:#a1a1a1;-webkit-text-stroke:0.2px #a1a1a1;letter-spacing:0.086px;">Assign reviewer</div>
<svg class="ic" style="left:1671px;top:1297px;width:16px;height:16px;" viewBox="0 0 24 24" fill="none" stroke="#a1a1a1" stroke-width="2" stroke-linecap="round" stroke-linejoin="round"><path d="M6 9l6 6l6 -6"/></svg>
<svg class="ic" style="left:1826px;top:1297px;width:16px;height:16px;" viewBox="0 0 24 24" fill="none" stroke="#fafafa" stroke-width="2" stroke-linecap="round" stroke-linejoin="round"><path d="M12 12m-1 0a1 1 0 1 0 2 0a1 1 0 1 0 -2 0"/><path d="M12 19m-1 0a1 1 0 1 0 2 0a1 1 0 1 0 -2 0"/><path d="M12 5m-1 0a1 1 0 1 0 2 0a1 1 0 1 0 -2 0"/></svg>
<div class="t" style="left:328px;top:1357px;font-size:14px;line-height:14px;color:#a1a1a1;-webkit-text-stroke:0.2px #a1a1a1;letter-spacing:0.217px;">0 of 68 row(s) selected.</div>
<div class="t" style="left:1401px;top:1357px;font-size:14px;line-height:14px;color:#fafafa;-webkit-text-stroke:0.45px #fafafa;letter-spacing:0.258px;">Rows per page</div>
<div class="r" style="left:1506px;top:1348px;width:80px;height:32px;background:#131313;border:1px solid #2c2c2c;box-sizing:border-box;border-radius:8px;"></div>
<div class="t" style="left:1519px;top:1357px;font-size:14px;line-height:14px;color:#fafafa;-webkit-text-stroke:0.45px #fafafa;letter-spacing:0.35px;">10</div>
<svg class="ic" style="left:1557px;top:1356px;width:16px;height:16px;" viewBox="0 0 24 24" fill="none" stroke="#a1a1a1" stroke-width="2" stroke-linecap="round" stroke-linejoin="round"><path d="M6 9l6 6l6 -6"/></svg>
<div class="t" style="left:1618.5px;top:1357px;font-size:14px;line-height:14px;color:#fafafa;-webkit-text-stroke:0.45px #fafafa;letter-spacing:-0.25px;">Page 1 of 7</div>
<div class="r" style="left:1720px;top:1348px;width:32px;height:32px;background:#131313;border:1px solid #2c2c2c;box-sizing:border-box;border-radius:8px;opacity:0.5;"><svg class="ic" style="left:7px;top:7px;width:16px;height:16px;" viewBox="0 0 24 24" fill="none" stroke="#fafafa" stroke-width="2" stroke-linecap="round" stroke-linejoin="round"><path d="M11 7l-5 5l5 5"/><path d="M17 7l-5 5l5 5"/></svg></div>
<div class="r" style="left:1760px;top:1348px;width:32px;height:32px;background:#131313;border:1px solid #2c2c2c;box-sizing:border-box;border-radius:8px;opacity:0.5;"><svg class="ic" style="left:7px;top:7px;width:16px;height:16px;" viewBox="0 0 24 24" fill="none" stroke="#fafafa" stroke-width="2" stroke-linecap="round" stroke-linejoin="round"><path d="M15 6l-6 6l6 6"/></svg></div>
<div class="r" style="left:1800px;top:1348px;width:32px;height:32px;background:#131313;border:1px solid #2c2c2c;box-sizing:border-box;border-radius:8px;opacity:1;"><svg class="ic" style="left:7px;top:7px;width:16px;height:16px;" viewBox="0 0 24 24" fill="none" stroke="#fafafa" stroke-width="2" stroke-linecap="round" stroke-linejoin="round"><path d="M9 6l6 6l-6 6"/></svg></div>
<div class="r" style="left:1840px;top:1348px;width:32px;height:32px;background:#131313;border:1px solid #2c2c2c;box-sizing:border-box;border-radius:8px;opacity:1;"><svg class="ic" style="left:7px;top:7px;width:16px;height:16px;" viewBox="0 0 24 24" fill="none" stroke="#fafafa" stroke-width="2" stroke-linecap="round" stroke-linejoin="round"><path d="M7 7l5 5l-5 5"/><path d="M13 7l5 5l-5 5"/></svg></div>
</body></html>
